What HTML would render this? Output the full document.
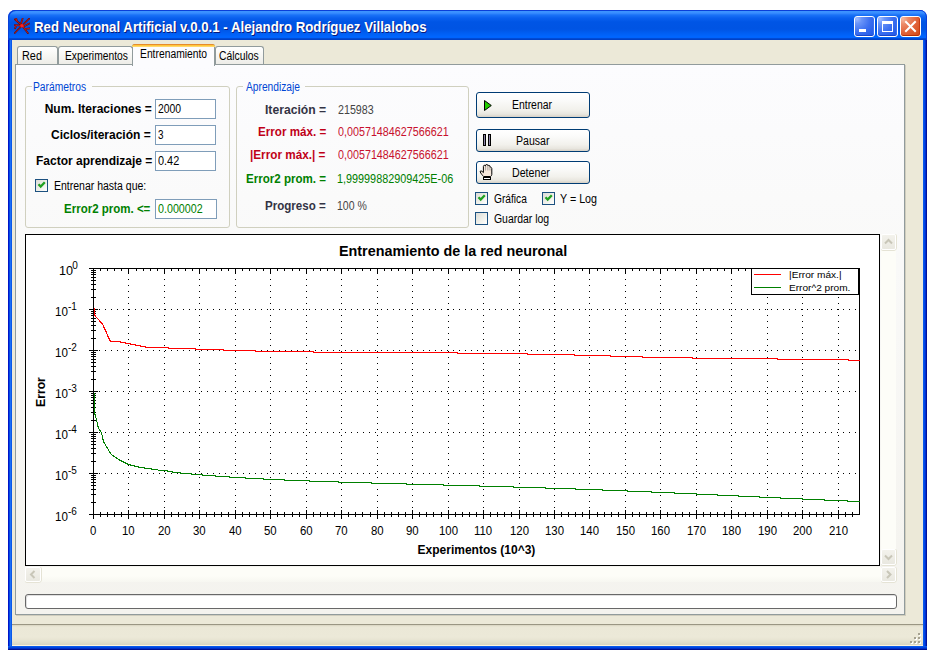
<!DOCTYPE html>
<html><head><meta charset="utf-8"><title>Red Neuronal Artificial</title>
<style>
html,body{margin:0;padding:0;background:#fff;width:938px;height:659px;overflow:hidden;font-family:"Liberation Sans",sans-serif;}
.abs{position:absolute;}
.t{position:absolute;white-space:nowrap;}
/* window frame */
#frame{position:absolute;left:8px;top:10px;width:919px;height:640px;background:#0831d9;border-radius:7px 7px 0 0;overflow:hidden;}
#title{position:absolute;left:0;top:0;width:919px;height:30px;border-radius:7px 7px 0 0;box-shadow:inset 1px 1px 0 #0a3fd8,inset -1px 0 0 #0a3fd8;
 background:linear-gradient(to bottom,#0a3fd8 0px,#0a3fd8 1px,#3d95ff 1px,#3a8eff 3px,#1a72f7 5px,#0a60ee 8px,#0055e5 12px,#0054e3 19px,#005ef2 23px,#0066ff 27px,#0062fb 28px,#0050dc 28px,#003cc0 30px);}
#lb{position:absolute;left:0;top:30px;width:4px;height:610px;background:linear-gradient(to right,#0015c8 0,#0015c8 1px,#0048e6 1px,#0048e6 2px,#1d6ff5 2px,#1d6ff5 3px,#0a58ea 3px);}
#rb{position:absolute;left:915px;top:30px;width:4px;height:610px;background:linear-gradient(to right,#0a58ea 0,#0a58ea 1px,#0048e6 1px,#0048e6 2px,#0030d0 2px,#0030d0 3px,#00139a 3px);}
#bb{position:absolute;left:0;top:636px;width:919px;height:4px;background:linear-gradient(to bottom,#0a58ea 0,#0a58ea 1px,#0046e0 1px,#0046e0 2px,#0030c8 2px,#0030c8 3px,#001090 3px);}
#client{position:absolute;left:12px;top:40px;width:911px;height:606px;background:#ece9d8;}
#status{position:absolute;left:12px;top:624px;width:911px;height:22px;
 background:linear-gradient(to bottom,#9a9683 0,#9a9683 1px,#d6d2bf 1px,#e4e0cd 2px,#ebe8d7 3px,#ece9d8 13px,#e6e2d0 17px,#d9d5c2 21px,#fff4dc 21px,#fff4dc 22px);}
.grip{position:absolute;width:2px;height:2px;background:#a5a18f;box-shadow:1px 1px 0 #fff;}
/* title buttons */
.tbtn{position:absolute;top:16px;width:19px;height:19px;border:1px solid #fff;border-radius:3px;
 background:radial-gradient(circle at 10% 10%,#a0bcff 0,#6a94f8 20%,#3c6ff0 55%,#2a60ea 80%,#2058e4 100%);box-shadow:inset 0 -1px 0 #1a45c8,inset -1px 0 0 #3a70f0;}
.tbtn.close{background:radial-gradient(circle at 10% 10%,#f6b8a0 0,#ec8a68 22%,#e2643c 55%,#d8501f 85%,#cc4012 100%);box-shadow:inset 0 -1px 0 #b83008,inset -1px 0 0 #c83a10;}
/* tabs */
#panel{position:absolute;left:15px;top:64px;width:888px;height:549px;border:1px solid #919b9c;
 background:linear-gradient(to bottom,#fcfcfe 0,#f9f9f8 200px,#f4f3ee 548px);box-shadow:1px 1px 0 #d0cdbd;}
.tab{position:absolute;top:46px;height:17px;border:1px solid #919b9c;border-bottom:none;border-radius:3px 3px 0 0;
 background:linear-gradient(to bottom,#ffffff 0,#f7f7f4 8px,#ecebe6 18px);}
#seltab{position:absolute;left:132px;top:44px;width:81px;height:21px;border:1px solid #919b9c;border-bottom:none;border-radius:3px 3px 0 0;background:#fcfcfe;}
#seltab:before{content:"";position:absolute;left:-1px;top:-1px;right:-1px;height:3px;background:linear-gradient(to bottom,#e68b2c 0,#e68b2c 1px,#ffc73c 1px,#ffc73c 2px,#ffd86b 2px);border-radius:3px 3px 0 0;}
/* group boxes */
.grp{position:absolute;border:1px solid #d0d0bf;border-radius:3px;}
.glbl{position:absolute;height:6px;background:#fbfbfc;}
/* textbox */
.tb{position:absolute;border:1px solid #7f9db9;background:#fff;width:59px;height:18px;}
/* buttons */
.btn{position:absolute;left:476px;width:112px;border:1px solid #003c74;border-radius:3px;
 background:linear-gradient(to bottom,#ffffff 0,#fbfbfa 30%,#f2f1ec 70%,#e8e6df 88%,#d6d0c5 100%);}
/* checkbox */
.cb{position:absolute;width:11px;height:11px;border:1px solid #1c5180;
 background:linear-gradient(135deg,#dcdcd7 0,#f0f0ea 55%,#ffffff 100%);}
.chk{position:absolute;left:2px;top:2px;}
/* chart */
#chartbox{position:absolute;left:25px;top:234px;width:853px;height:330px;border:1px solid #000;background:#fff;}
.sbtn{position:absolute;width:13px;height:14px;border:1px solid #fff;border-radius:2px;background:linear-gradient(to bottom,#f3f2ec,#e9e8e0);box-shadow:0 1px 0 #e5e3d5, 1px 0 0 #e5e3d5;}
#vtrack{position:absolute;left:881px;top:234px;width:15px;height:331px;background:#fdfdf8;}
#htrack{position:absolute;left:25px;top:567px;width:856px;height:15px;background:linear-gradient(to bottom,#fdfdf8,#fdfdf8 60%,#f7f7f1);}
#prog{position:absolute;left:25px;top:594px;width:870px;height:13px;border:1px solid #686868;border-radius:3px;background:#fff;box-shadow:inset 1px 1px 0 #e0e0e0;}
</style></head>
<body>
<div id="frame">
  <div id="title"></div>
  <div id="lb"></div><div id="rb"></div><div id="bb"></div>
</div>
<div id="client"></div>
<div id="status"></div>
<div class="grip" style="left:918px;top:633px"></div>
<div class="grip" style="left:914px;top:637px"></div><div class="grip" style="left:918px;top:637px"></div>
<div class="grip" style="left:910px;top:641px"></div><div class="grip" style="left:914px;top:641px"></div><div class="grip" style="left:918px;top:641px"></div>

<!-- app icon -->
<svg class="abs" style="left:14px;top:18px" width="16" height="16" viewBox="0 0 16 16">
 <g stroke="#5a0a0a" stroke-width="1.7" stroke-linecap="round" fill="none">
  <path d="M8,7.5 L0.8,1.3 M3,3.2 L2.3,0.6 M7,5.5 L8.6,0.6 M8,7.5 L15.2,0.6 M9.5,8.5 L15.3,5.4 M8,7.5 L0.6,7.2 M2.5,7.3 L1,10.3 M8,7.5 L0.8,15 M8,7.5 L14,15.2 M11,11 L15.6,10.4"/>
 </g>
 <g stroke="#e02020" stroke-width="0.7" stroke-linecap="round" fill="none">
  <path d="M8,7.5 L0.8,1.3 M3,3.2 L2.3,0.6 M7,5.5 L8.6,0.6 M8,7.5 L15.2,0.6 M9.5,8.5 L15.3,5.4 M8,7.5 L0.6,7.2 M2.5,7.3 L1,10.3 M8,7.5 L0.8,15 M8,7.5 L14,15.2 M11,11 L15.6,10.4"/>
 </g>
 <circle cx="8" cy="7.8" r="1.7" fill="#ff2020"/>
</svg>
<!-- title buttons -->
<div class="tbtn" style="left:854px"><div class="abs" style="left:4px;top:12px;width:7px;height:3px;background:#fff"></div></div>
<div class="tbtn" style="left:877px"><div class="abs" style="left:4px;top:4px;width:9px;height:7px;border:1px solid #fff;border-top-width:3px;"></div></div>
<div class="tbtn close" style="left:900px">
 <svg class="abs" style="left:0;top:0" width="19" height="19"><path d="M5,5 L14,14 M14,5 L5,14" stroke="#fff" stroke-width="2" stroke-linecap="square"/></svg>
</div>

<!-- tabs -->
<div class="tab" style="left:17px;width:39px"></div>
<div class="tab" style="left:58px;width:73px"></div>
<div class="tab" style="left:215px;width:47px"></div>
<div id="panel"></div>
<div id="seltab"></div>

<!-- group boxes -->
<div class="grp" style="left:25px;top:86px;width:203px;height:140px"></div>
<div class="glbl" style="left:32px;top:83px;width:60px"></div>
<div class="grp" style="left:236px;top:86px;width:231px;height:140px"></div>
<div class="glbl" style="left:243px;top:83px;width:62px"></div>

<!-- text boxes -->
<div class="tb" style="left:155px;top:99px"></div>
<div class="tb" style="left:155px;top:125px"></div>
<div class="tb" style="left:155px;top:151px"></div>
<div class="tb" style="left:155px;top:199px;width:60px"></div>

<!-- checkbox: entrenar hasta -->
<div class="cb" style="left:35px;top:179px"><svg class="chk" width="9" height="9" style="left:1px;top:1px"><path d="M1.5,3.3 L3.7,5.6 L7.8,1.3" stroke="#21a121" stroke-width="2.3" fill="none"/></svg></div>

<!-- buttons -->
<div class="btn" style="top:92px;height:24px"></div>
<div class="btn" style="top:129px;height:21px"></div>
<div class="btn" style="top:161px;height:21px"></div>
<svg class="abs" style="left:483px;top:99px" width="10" height="13"><path d="M1.5,1.5 L1.5,11.5 L8.3,6.5 Z" fill="#22cc00" stroke="#000" stroke-width="1"/></svg>
<svg class="abs" style="left:482px;top:134px" width="10" height="13"><rect x="1.5" y="0.5" width="2" height="11" fill="#8c84a8" stroke="#000" stroke-width="1"/><rect x="6.5" y="0.5" width="2" height="11" fill="#8c84a8" stroke="#000" stroke-width="1"/></svg>
<svg class="abs" style="left:479px;top:164px" width="15" height="17" viewBox="0 0 15 17">
 <path d="M4.6,12.5 C3.5,11.5 2,9.5 1.2,8 Q0.9,6.9 2.1,6.9 Q3,7.1 4.4,8.6 L4.4,2.4 Q4.5,1.3 5.5,1.3 Q6.4,1.3 6.5,2.2 L6.6,1.2 Q6.8,0.4 7.7,0.4 Q8.7,0.5 8.8,1.4 L8.9,1.8 Q9.2,1.2 10,1.3 Q10.9,1.5 10.9,2.5 L11,3.2 Q11.5,2.9 12.1,3.3 Q12.8,3.8 12.8,4.6 L12.8,10.4 Q12.5,12 11.6,12.5 Z" fill="#f6e8dc" stroke="#000" stroke-width="1"/>
 <path d="M6.55,2 L6.55,6.5 M8.85,1.8 L8.85,6.5 M10.95,2.8 L10.95,6.5" stroke="#8a8a8a" stroke-width="0.7"/>
 <rect x="4.5" y="13.5" width="7" height="2" fill="#fff" stroke="#000" stroke-width="1"/>
</svg>

<!-- checkboxes right -->
<div class="cb" style="left:475px;top:192px"><svg class="chk" width="9" height="9" style="left:1px;top:1px"><path d="M1.5,3.3 L3.7,5.6 L7.8,1.3" stroke="#21a121" stroke-width="2.3" fill="none"/></svg></div>
<div class="cb" style="left:542px;top:192px"><svg class="chk" width="9" height="9" style="left:1px;top:1px"><path d="M1.5,3.3 L3.7,5.6 L7.8,1.3" stroke="#21a121" stroke-width="2.3" fill="none"/></svg></div>
<div class="cb" style="left:475px;top:212px"></div>

<!-- chart -->
<div id="chartbox"></div>
<div id="vtrack"></div>
<div id="htrack"></div>
<div class="sbtn" style="left:881px;top:234px"><svg class="abs" style="left:0;top:0" width="13" height="14"><path d="M3,8.5 L6.5,5 L10,8.5" stroke="#c8c6b8" stroke-width="2" fill="none"/></svg></div>
<div class="sbtn" style="left:881px;top:549px"><svg class="abs" style="left:0;top:0" width="13" height="14"><path d="M3,5.5 L6.5,9 L10,5.5" stroke="#c8c6b8" stroke-width="2" fill="none"/></svg></div>
<div class="sbtn" style="left:25px;top:567px;width:14px;height:13px"><svg class="abs" style="left:0;top:0" width="14" height="13"><path d="M8.5,3 L5,6.5 L8.5,10" stroke="#c8c6b8" stroke-width="2" fill="none"/></svg></div>
<div class="sbtn" style="left:881px;top:567px;width:13px;height:13px"><svg class="abs" style="left:0;top:0" width="13" height="13"><path d="M5,3 L8.5,6.5 L5,10" stroke="#c8c6b8" stroke-width="2" fill="none"/></svg></div>
<div id="prog"></div>

<svg class='abs' style='left:0;top:0' width='938' height='659' shape-rendering='crispEdges'><rect x='99' y='309' width='1' height='1' fill='#000'/><rect x='105' y='309' width='1' height='1' fill='#000'/><rect x='111' y='309' width='1' height='1' fill='#000'/><rect x='117' y='309' width='1' height='1' fill='#000'/><rect x='123' y='309' width='1' height='1' fill='#000'/><rect x='129' y='309' width='1' height='1' fill='#000'/><rect x='135' y='309' width='1' height='1' fill='#000'/><rect x='141' y='309' width='1' height='1' fill='#000'/><rect x='147' y='309' width='1' height='1' fill='#000'/><rect x='153' y='309' width='1' height='1' fill='#000'/><rect x='159' y='309' width='1' height='1' fill='#000'/><rect x='165' y='309' width='1' height='1' fill='#000'/><rect x='171' y='309' width='1' height='1' fill='#000'/><rect x='177' y='309' width='1' height='1' fill='#000'/><rect x='183' y='309' width='1' height='1' fill='#000'/><rect x='189' y='309' width='1' height='1' fill='#000'/><rect x='195' y='309' width='1' height='1' fill='#000'/><rect x='201' y='309' width='1' height='1' fill='#000'/><rect x='207' y='309' width='1' height='1' fill='#000'/><rect x='213' y='309' width='1' height='1' fill='#000'/><rect x='219' y='309' width='1' height='1' fill='#000'/><rect x='225' y='309' width='1' height='1' fill='#000'/><rect x='231' y='309' width='1' height='1' fill='#000'/><rect x='237' y='309' width='1' height='1' fill='#000'/><rect x='243' y='309' width='1' height='1' fill='#000'/><rect x='249' y='309' width='1' height='1' fill='#000'/><rect x='255' y='309' width='1' height='1' fill='#000'/><rect x='261' y='309' width='1' height='1' fill='#000'/><rect x='267' y='309' width='1' height='1' fill='#000'/><rect x='273' y='309' width='1' height='1' fill='#000'/><rect x='279' y='309' width='1' height='1' fill='#000'/><rect x='285' y='309' width='1' height='1' fill='#000'/><rect x='291' y='309' width='1' height='1' fill='#000'/><rect x='297' y='309' width='1' height='1' fill='#000'/><rect x='303' y='309' width='1' height='1' fill='#000'/><rect x='309' y='309' width='1' height='1' fill='#000'/><rect x='315' y='309' width='1' height='1' fill='#000'/><rect x='321' y='309' width='1' height='1' fill='#000'/><rect x='327' y='309' width='1' height='1' fill='#000'/><rect x='333' y='309' width='1' height='1' fill='#000'/><rect x='339' y='309' width='1' height='1' fill='#000'/><rect x='345' y='309' width='1' height='1' fill='#000'/><rect x='351' y='309' width='1' height='1' fill='#000'/><rect x='357' y='309' width='1' height='1' fill='#000'/><rect x='363' y='309' width='1' height='1' fill='#000'/><rect x='369' y='309' width='1' height='1' fill='#000'/><rect x='375' y='309' width='1' height='1' fill='#000'/><rect x='381' y='309' width='1' height='1' fill='#000'/><rect x='387' y='309' width='1' height='1' fill='#000'/><rect x='393' y='309' width='1' height='1' fill='#000'/><rect x='399' y='309' width='1' height='1' fill='#000'/><rect x='405' y='309' width='1' height='1' fill='#000'/><rect x='411' y='309' width='1' height='1' fill='#000'/><rect x='417' y='309' width='1' height='1' fill='#000'/><rect x='423' y='309' width='1' height='1' fill='#000'/><rect x='429' y='309' width='1' height='1' fill='#000'/><rect x='435' y='309' width='1' height='1' fill='#000'/><rect x='441' y='309' width='1' height='1' fill='#000'/><rect x='447' y='309' width='1' height='1' fill='#000'/><rect x='453' y='309' width='1' height='1' fill='#000'/><rect x='459' y='309' width='1' height='1' fill='#000'/><rect x='465' y='309' width='1' height='1' fill='#000'/><rect x='471' y='309' width='1' height='1' fill='#000'/><rect x='477' y='309' width='1' height='1' fill='#000'/><rect x='483' y='309' width='1' height='1' fill='#000'/><rect x='489' y='309' width='1' height='1' fill='#000'/><rect x='495' y='309' width='1' height='1' fill='#000'/><rect x='501' y='309' width='1' height='1' fill='#000'/><rect x='507' y='309' width='1' height='1' fill='#000'/><rect x='513' y='309' width='1' height='1' fill='#000'/><rect x='519' y='309' width='1' height='1' fill='#000'/><rect x='525' y='309' width='1' height='1' fill='#000'/><rect x='531' y='309' width='1' height='1' fill='#000'/><rect x='537' y='309' width='1' height='1' fill='#000'/><rect x='543' y='309' width='1' height='1' fill='#000'/><rect x='549' y='309' width='1' height='1' fill='#000'/><rect x='555' y='309' width='1' height='1' fill='#000'/><rect x='561' y='309' width='1' height='1' fill='#000'/><rect x='567' y='309' width='1' height='1' fill='#000'/><rect x='573' y='309' width='1' height='1' fill='#000'/><rect x='579' y='309' width='1' height='1' fill='#000'/><rect x='585' y='309' width='1' height='1' fill='#000'/><rect x='591' y='309' width='1' height='1' fill='#000'/><rect x='597' y='309' width='1' height='1' fill='#000'/><rect x='603' y='309' width='1' height='1' fill='#000'/><rect x='609' y='309' width='1' height='1' fill='#000'/><rect x='615' y='309' width='1' height='1' fill='#000'/><rect x='621' y='309' width='1' height='1' fill='#000'/><rect x='627' y='309' width='1' height='1' fill='#000'/><rect x='633' y='309' width='1' height='1' fill='#000'/><rect x='639' y='309' width='1' height='1' fill='#000'/><rect x='645' y='309' width='1' height='1' fill='#000'/><rect x='651' y='309' width='1' height='1' fill='#000'/><rect x='657' y='309' width='1' height='1' fill='#000'/><rect x='663' y='309' width='1' height='1' fill='#000'/><rect x='669' y='309' width='1' height='1' fill='#000'/><rect x='675' y='309' width='1' height='1' fill='#000'/><rect x='681' y='309' width='1' height='1' fill='#000'/><rect x='687' y='309' width='1' height='1' fill='#000'/><rect x='693' y='309' width='1' height='1' fill='#000'/><rect x='699' y='309' width='1' height='1' fill='#000'/><rect x='705' y='309' width='1' height='1' fill='#000'/><rect x='711' y='309' width='1' height='1' fill='#000'/><rect x='717' y='309' width='1' height='1' fill='#000'/><rect x='723' y='309' width='1' height='1' fill='#000'/><rect x='729' y='309' width='1' height='1' fill='#000'/><rect x='735' y='309' width='1' height='1' fill='#000'/><rect x='741' y='309' width='1' height='1' fill='#000'/><rect x='747' y='309' width='1' height='1' fill='#000'/><rect x='753' y='309' width='1' height='1' fill='#000'/><rect x='759' y='309' width='1' height='1' fill='#000'/><rect x='765' y='309' width='1' height='1' fill='#000'/><rect x='771' y='309' width='1' height='1' fill='#000'/><rect x='777' y='309' width='1' height='1' fill='#000'/><rect x='783' y='309' width='1' height='1' fill='#000'/><rect x='789' y='309' width='1' height='1' fill='#000'/><rect x='795' y='309' width='1' height='1' fill='#000'/><rect x='801' y='309' width='1' height='1' fill='#000'/><rect x='807' y='309' width='1' height='1' fill='#000'/><rect x='813' y='309' width='1' height='1' fill='#000'/><rect x='819' y='309' width='1' height='1' fill='#000'/><rect x='825' y='309' width='1' height='1' fill='#000'/><rect x='831' y='309' width='1' height='1' fill='#000'/><rect x='837' y='309' width='1' height='1' fill='#000'/><rect x='843' y='309' width='1' height='1' fill='#000'/><rect x='849' y='309' width='1' height='1' fill='#000'/><rect x='855' y='309' width='1' height='1' fill='#000'/><rect x='99' y='350' width='1' height='1' fill='#000'/><rect x='105' y='350' width='1' height='1' fill='#000'/><rect x='111' y='350' width='1' height='1' fill='#000'/><rect x='117' y='350' width='1' height='1' fill='#000'/><rect x='123' y='350' width='1' height='1' fill='#000'/><rect x='129' y='350' width='1' height='1' fill='#000'/><rect x='135' y='350' width='1' height='1' fill='#000'/><rect x='141' y='350' width='1' height='1' fill='#000'/><rect x='147' y='350' width='1' height='1' fill='#000'/><rect x='153' y='350' width='1' height='1' fill='#000'/><rect x='159' y='350' width='1' height='1' fill='#000'/><rect x='165' y='350' width='1' height='1' fill='#000'/><rect x='171' y='350' width='1' height='1' fill='#000'/><rect x='177' y='350' width='1' height='1' fill='#000'/><rect x='183' y='350' width='1' height='1' fill='#000'/><rect x='189' y='350' width='1' height='1' fill='#000'/><rect x='195' y='350' width='1' height='1' fill='#000'/><rect x='201' y='350' width='1' height='1' fill='#000'/><rect x='207' y='350' width='1' height='1' fill='#000'/><rect x='213' y='350' width='1' height='1' fill='#000'/><rect x='219' y='350' width='1' height='1' fill='#000'/><rect x='225' y='350' width='1' height='1' fill='#000'/><rect x='231' y='350' width='1' height='1' fill='#000'/><rect x='237' y='350' width='1' height='1' fill='#000'/><rect x='243' y='350' width='1' height='1' fill='#000'/><rect x='249' y='350' width='1' height='1' fill='#000'/><rect x='255' y='350' width='1' height='1' fill='#000'/><rect x='261' y='350' width='1' height='1' fill='#000'/><rect x='267' y='350' width='1' height='1' fill='#000'/><rect x='273' y='350' width='1' height='1' fill='#000'/><rect x='279' y='350' width='1' height='1' fill='#000'/><rect x='285' y='350' width='1' height='1' fill='#000'/><rect x='291' y='350' width='1' height='1' fill='#000'/><rect x='297' y='350' width='1' height='1' fill='#000'/><rect x='303' y='350' width='1' height='1' fill='#000'/><rect x='309' y='350' width='1' height='1' fill='#000'/><rect x='315' y='350' width='1' height='1' fill='#000'/><rect x='321' y='350' width='1' height='1' fill='#000'/><rect x='327' y='350' width='1' height='1' fill='#000'/><rect x='333' y='350' width='1' height='1' fill='#000'/><rect x='339' y='350' width='1' height='1' fill='#000'/><rect x='345' y='350' width='1' height='1' fill='#000'/><rect x='351' y='350' width='1' height='1' fill='#000'/><rect x='357' y='350' width='1' height='1' fill='#000'/><rect x='363' y='350' width='1' height='1' fill='#000'/><rect x='369' y='350' width='1' height='1' fill='#000'/><rect x='375' y='350' width='1' height='1' fill='#000'/><rect x='381' y='350' width='1' height='1' fill='#000'/><rect x='387' y='350' width='1' height='1' fill='#000'/><rect x='393' y='350' width='1' height='1' fill='#000'/><rect x='399' y='350' width='1' height='1' fill='#000'/><rect x='405' y='350' width='1' height='1' fill='#000'/><rect x='411' y='350' width='1' height='1' fill='#000'/><rect x='417' y='350' width='1' height='1' fill='#000'/><rect x='423' y='350' width='1' height='1' fill='#000'/><rect x='429' y='350' width='1' height='1' fill='#000'/><rect x='435' y='350' width='1' height='1' fill='#000'/><rect x='441' y='350' width='1' height='1' fill='#000'/><rect x='447' y='350' width='1' height='1' fill='#000'/><rect x='453' y='350' width='1' height='1' fill='#000'/><rect x='459' y='350' width='1' height='1' fill='#000'/><rect x='465' y='350' width='1' height='1' fill='#000'/><rect x='471' y='350' width='1' height='1' fill='#000'/><rect x='477' y='350' width='1' height='1' fill='#000'/><rect x='483' y='350' width='1' height='1' fill='#000'/><rect x='489' y='350' width='1' height='1' fill='#000'/><rect x='495' y='350' width='1' height='1' fill='#000'/><rect x='501' y='350' width='1' height='1' fill='#000'/><rect x='507' y='350' width='1' height='1' fill='#000'/><rect x='513' y='350' width='1' height='1' fill='#000'/><rect x='519' y='350' width='1' height='1' fill='#000'/><rect x='525' y='350' width='1' height='1' fill='#000'/><rect x='531' y='350' width='1' height='1' fill='#000'/><rect x='537' y='350' width='1' height='1' fill='#000'/><rect x='543' y='350' width='1' height='1' fill='#000'/><rect x='549' y='350' width='1' height='1' fill='#000'/><rect x='555' y='350' width='1' height='1' fill='#000'/><rect x='561' y='350' width='1' height='1' fill='#000'/><rect x='567' y='350' width='1' height='1' fill='#000'/><rect x='573' y='350' width='1' height='1' fill='#000'/><rect x='579' y='350' width='1' height='1' fill='#000'/><rect x='585' y='350' width='1' height='1' fill='#000'/><rect x='591' y='350' width='1' height='1' fill='#000'/><rect x='597' y='350' width='1' height='1' fill='#000'/><rect x='603' y='350' width='1' height='1' fill='#000'/><rect x='609' y='350' width='1' height='1' fill='#000'/><rect x='615' y='350' width='1' height='1' fill='#000'/><rect x='621' y='350' width='1' height='1' fill='#000'/><rect x='627' y='350' width='1' height='1' fill='#000'/><rect x='633' y='350' width='1' height='1' fill='#000'/><rect x='639' y='350' width='1' height='1' fill='#000'/><rect x='645' y='350' width='1' height='1' fill='#000'/><rect x='651' y='350' width='1' height='1' fill='#000'/><rect x='657' y='350' width='1' height='1' fill='#000'/><rect x='663' y='350' width='1' height='1' fill='#000'/><rect x='669' y='350' width='1' height='1' fill='#000'/><rect x='675' y='350' width='1' height='1' fill='#000'/><rect x='681' y='350' width='1' height='1' fill='#000'/><rect x='687' y='350' width='1' height='1' fill='#000'/><rect x='693' y='350' width='1' height='1' fill='#000'/><rect x='699' y='350' width='1' height='1' fill='#000'/><rect x='705' y='350' width='1' height='1' fill='#000'/><rect x='711' y='350' width='1' height='1' fill='#000'/><rect x='717' y='350' width='1' height='1' fill='#000'/><rect x='723' y='350' width='1' height='1' fill='#000'/><rect x='729' y='350' width='1' height='1' fill='#000'/><rect x='735' y='350' width='1' height='1' fill='#000'/><rect x='741' y='350' width='1' height='1' fill='#000'/><rect x='747' y='350' width='1' height='1' fill='#000'/><rect x='753' y='350' width='1' height='1' fill='#000'/><rect x='759' y='350' width='1' height='1' fill='#000'/><rect x='765' y='350' width='1' height='1' fill='#000'/><rect x='771' y='350' width='1' height='1' fill='#000'/><rect x='777' y='350' width='1' height='1' fill='#000'/><rect x='783' y='350' width='1' height='1' fill='#000'/><rect x='789' y='350' width='1' height='1' fill='#000'/><rect x='795' y='350' width='1' height='1' fill='#000'/><rect x='801' y='350' width='1' height='1' fill='#000'/><rect x='807' y='350' width='1' height='1' fill='#000'/><rect x='813' y='350' width='1' height='1' fill='#000'/><rect x='819' y='350' width='1' height='1' fill='#000'/><rect x='825' y='350' width='1' height='1' fill='#000'/><rect x='831' y='350' width='1' height='1' fill='#000'/><rect x='837' y='350' width='1' height='1' fill='#000'/><rect x='843' y='350' width='1' height='1' fill='#000'/><rect x='849' y='350' width='1' height='1' fill='#000'/><rect x='855' y='350' width='1' height='1' fill='#000'/><rect x='99' y='391' width='1' height='1' fill='#000'/><rect x='105' y='391' width='1' height='1' fill='#000'/><rect x='111' y='391' width='1' height='1' fill='#000'/><rect x='117' y='391' width='1' height='1' fill='#000'/><rect x='123' y='391' width='1' height='1' fill='#000'/><rect x='129' y='391' width='1' height='1' fill='#000'/><rect x='135' y='391' width='1' height='1' fill='#000'/><rect x='141' y='391' width='1' height='1' fill='#000'/><rect x='147' y='391' width='1' height='1' fill='#000'/><rect x='153' y='391' width='1' height='1' fill='#000'/><rect x='159' y='391' width='1' height='1' fill='#000'/><rect x='165' y='391' width='1' height='1' fill='#000'/><rect x='171' y='391' width='1' height='1' fill='#000'/><rect x='177' y='391' width='1' height='1' fill='#000'/><rect x='183' y='391' width='1' height='1' fill='#000'/><rect x='189' y='391' width='1' height='1' fill='#000'/><rect x='195' y='391' width='1' height='1' fill='#000'/><rect x='201' y='391' width='1' height='1' fill='#000'/><rect x='207' y='391' width='1' height='1' fill='#000'/><rect x='213' y='391' width='1' height='1' fill='#000'/><rect x='219' y='391' width='1' height='1' fill='#000'/><rect x='225' y='391' width='1' height='1' fill='#000'/><rect x='231' y='391' width='1' height='1' fill='#000'/><rect x='237' y='391' width='1' height='1' fill='#000'/><rect x='243' y='391' width='1' height='1' fill='#000'/><rect x='249' y='391' width='1' height='1' fill='#000'/><rect x='255' y='391' width='1' height='1' fill='#000'/><rect x='261' y='391' width='1' height='1' fill='#000'/><rect x='267' y='391' width='1' height='1' fill='#000'/><rect x='273' y='391' width='1' height='1' fill='#000'/><rect x='279' y='391' width='1' height='1' fill='#000'/><rect x='285' y='391' width='1' height='1' fill='#000'/><rect x='291' y='391' width='1' height='1' fill='#000'/><rect x='297' y='391' width='1' height='1' fill='#000'/><rect x='303' y='391' width='1' height='1' fill='#000'/><rect x='309' y='391' width='1' height='1' fill='#000'/><rect x='315' y='391' width='1' height='1' fill='#000'/><rect x='321' y='391' width='1' height='1' fill='#000'/><rect x='327' y='391' width='1' height='1' fill='#000'/><rect x='333' y='391' width='1' height='1' fill='#000'/><rect x='339' y='391' width='1' height='1' fill='#000'/><rect x='345' y='391' width='1' height='1' fill='#000'/><rect x='351' y='391' width='1' height='1' fill='#000'/><rect x='357' y='391' width='1' height='1' fill='#000'/><rect x='363' y='391' width='1' height='1' fill='#000'/><rect x='369' y='391' width='1' height='1' fill='#000'/><rect x='375' y='391' width='1' height='1' fill='#000'/><rect x='381' y='391' width='1' height='1' fill='#000'/><rect x='387' y='391' width='1' height='1' fill='#000'/><rect x='393' y='391' width='1' height='1' fill='#000'/><rect x='399' y='391' width='1' height='1' fill='#000'/><rect x='405' y='391' width='1' height='1' fill='#000'/><rect x='411' y='391' width='1' height='1' fill='#000'/><rect x='417' y='391' width='1' height='1' fill='#000'/><rect x='423' y='391' width='1' height='1' fill='#000'/><rect x='429' y='391' width='1' height='1' fill='#000'/><rect x='435' y='391' width='1' height='1' fill='#000'/><rect x='441' y='391' width='1' height='1' fill='#000'/><rect x='447' y='391' width='1' height='1' fill='#000'/><rect x='453' y='391' width='1' height='1' fill='#000'/><rect x='459' y='391' width='1' height='1' fill='#000'/><rect x='465' y='391' width='1' height='1' fill='#000'/><rect x='471' y='391' width='1' height='1' fill='#000'/><rect x='477' y='391' width='1' height='1' fill='#000'/><rect x='483' y='391' width='1' height='1' fill='#000'/><rect x='489' y='391' width='1' height='1' fill='#000'/><rect x='495' y='391' width='1' height='1' fill='#000'/><rect x='501' y='391' width='1' height='1' fill='#000'/><rect x='507' y='391' width='1' height='1' fill='#000'/><rect x='513' y='391' width='1' height='1' fill='#000'/><rect x='519' y='391' width='1' height='1' fill='#000'/><rect x='525' y='391' width='1' height='1' fill='#000'/><rect x='531' y='391' width='1' height='1' fill='#000'/><rect x='537' y='391' width='1' height='1' fill='#000'/><rect x='543' y='391' width='1' height='1' fill='#000'/><rect x='549' y='391' width='1' height='1' fill='#000'/><rect x='555' y='391' width='1' height='1' fill='#000'/><rect x='561' y='391' width='1' height='1' fill='#000'/><rect x='567' y='391' width='1' height='1' fill='#000'/><rect x='573' y='391' width='1' height='1' fill='#000'/><rect x='579' y='391' width='1' height='1' fill='#000'/><rect x='585' y='391' width='1' height='1' fill='#000'/><rect x='591' y='391' width='1' height='1' fill='#000'/><rect x='597' y='391' width='1' height='1' fill='#000'/><rect x='603' y='391' width='1' height='1' fill='#000'/><rect x='609' y='391' width='1' height='1' fill='#000'/><rect x='615' y='391' width='1' height='1' fill='#000'/><rect x='621' y='391' width='1' height='1' fill='#000'/><rect x='627' y='391' width='1' height='1' fill='#000'/><rect x='633' y='391' width='1' height='1' fill='#000'/><rect x='639' y='391' width='1' height='1' fill='#000'/><rect x='645' y='391' width='1' height='1' fill='#000'/><rect x='651' y='391' width='1' height='1' fill='#000'/><rect x='657' y='391' width='1' height='1' fill='#000'/><rect x='663' y='391' width='1' height='1' fill='#000'/><rect x='669' y='391' width='1' height='1' fill='#000'/><rect x='675' y='391' width='1' height='1' fill='#000'/><rect x='681' y='391' width='1' height='1' fill='#000'/><rect x='687' y='391' width='1' height='1' fill='#000'/><rect x='693' y='391' width='1' height='1' fill='#000'/><rect x='699' y='391' width='1' height='1' fill='#000'/><rect x='705' y='391' width='1' height='1' fill='#000'/><rect x='711' y='391' width='1' height='1' fill='#000'/><rect x='717' y='391' width='1' height='1' fill='#000'/><rect x='723' y='391' width='1' height='1' fill='#000'/><rect x='729' y='391' width='1' height='1' fill='#000'/><rect x='735' y='391' width='1' height='1' fill='#000'/><rect x='741' y='391' width='1' height='1' fill='#000'/><rect x='747' y='391' width='1' height='1' fill='#000'/><rect x='753' y='391' width='1' height='1' fill='#000'/><rect x='759' y='391' width='1' height='1' fill='#000'/><rect x='765' y='391' width='1' height='1' fill='#000'/><rect x='771' y='391' width='1' height='1' fill='#000'/><rect x='777' y='391' width='1' height='1' fill='#000'/><rect x='783' y='391' width='1' height='1' fill='#000'/><rect x='789' y='391' width='1' height='1' fill='#000'/><rect x='795' y='391' width='1' height='1' fill='#000'/><rect x='801' y='391' width='1' height='1' fill='#000'/><rect x='807' y='391' width='1' height='1' fill='#000'/><rect x='813' y='391' width='1' height='1' fill='#000'/><rect x='819' y='391' width='1' height='1' fill='#000'/><rect x='825' y='391' width='1' height='1' fill='#000'/><rect x='831' y='391' width='1' height='1' fill='#000'/><rect x='837' y='391' width='1' height='1' fill='#000'/><rect x='843' y='391' width='1' height='1' fill='#000'/><rect x='849' y='391' width='1' height='1' fill='#000'/><rect x='855' y='391' width='1' height='1' fill='#000'/><rect x='99' y='432' width='1' height='1' fill='#000'/><rect x='105' y='432' width='1' height='1' fill='#000'/><rect x='111' y='432' width='1' height='1' fill='#000'/><rect x='117' y='432' width='1' height='1' fill='#000'/><rect x='123' y='432' width='1' height='1' fill='#000'/><rect x='129' y='432' width='1' height='1' fill='#000'/><rect x='135' y='432' width='1' height='1' fill='#000'/><rect x='141' y='432' width='1' height='1' fill='#000'/><rect x='147' y='432' width='1' height='1' fill='#000'/><rect x='153' y='432' width='1' height='1' fill='#000'/><rect x='159' y='432' width='1' height='1' fill='#000'/><rect x='165' y='432' width='1' height='1' fill='#000'/><rect x='171' y='432' width='1' height='1' fill='#000'/><rect x='177' y='432' width='1' height='1' fill='#000'/><rect x='183' y='432' width='1' height='1' fill='#000'/><rect x='189' y='432' width='1' height='1' fill='#000'/><rect x='195' y='432' width='1' height='1' fill='#000'/><rect x='201' y='432' width='1' height='1' fill='#000'/><rect x='207' y='432' width='1' height='1' fill='#000'/><rect x='213' y='432' width='1' height='1' fill='#000'/><rect x='219' y='432' width='1' height='1' fill='#000'/><rect x='225' y='432' width='1' height='1' fill='#000'/><rect x='231' y='432' width='1' height='1' fill='#000'/><rect x='237' y='432' width='1' height='1' fill='#000'/><rect x='243' y='432' width='1' height='1' fill='#000'/><rect x='249' y='432' width='1' height='1' fill='#000'/><rect x='255' y='432' width='1' height='1' fill='#000'/><rect x='261' y='432' width='1' height='1' fill='#000'/><rect x='267' y='432' width='1' height='1' fill='#000'/><rect x='273' y='432' width='1' height='1' fill='#000'/><rect x='279' y='432' width='1' height='1' fill='#000'/><rect x='285' y='432' width='1' height='1' fill='#000'/><rect x='291' y='432' width='1' height='1' fill='#000'/><rect x='297' y='432' width='1' height='1' fill='#000'/><rect x='303' y='432' width='1' height='1' fill='#000'/><rect x='309' y='432' width='1' height='1' fill='#000'/><rect x='315' y='432' width='1' height='1' fill='#000'/><rect x='321' y='432' width='1' height='1' fill='#000'/><rect x='327' y='432' width='1' height='1' fill='#000'/><rect x='333' y='432' width='1' height='1' fill='#000'/><rect x='339' y='432' width='1' height='1' fill='#000'/><rect x='345' y='432' width='1' height='1' fill='#000'/><rect x='351' y='432' width='1' height='1' fill='#000'/><rect x='357' y='432' width='1' height='1' fill='#000'/><rect x='363' y='432' width='1' height='1' fill='#000'/><rect x='369' y='432' width='1' height='1' fill='#000'/><rect x='375' y='432' width='1' height='1' fill='#000'/><rect x='381' y='432' width='1' height='1' fill='#000'/><rect x='387' y='432' width='1' height='1' fill='#000'/><rect x='393' y='432' width='1' height='1' fill='#000'/><rect x='399' y='432' width='1' height='1' fill='#000'/><rect x='405' y='432' width='1' height='1' fill='#000'/><rect x='411' y='432' width='1' height='1' fill='#000'/><rect x='417' y='432' width='1' height='1' fill='#000'/><rect x='423' y='432' width='1' height='1' fill='#000'/><rect x='429' y='432' width='1' height='1' fill='#000'/><rect x='435' y='432' width='1' height='1' fill='#000'/><rect x='441' y='432' width='1' height='1' fill='#000'/><rect x='447' y='432' width='1' height='1' fill='#000'/><rect x='453' y='432' width='1' height='1' fill='#000'/><rect x='459' y='432' width='1' height='1' fill='#000'/><rect x='465' y='432' width='1' height='1' fill='#000'/><rect x='471' y='432' width='1' height='1' fill='#000'/><rect x='477' y='432' width='1' height='1' fill='#000'/><rect x='483' y='432' width='1' height='1' fill='#000'/><rect x='489' y='432' width='1' height='1' fill='#000'/><rect x='495' y='432' width='1' height='1' fill='#000'/><rect x='501' y='432' width='1' height='1' fill='#000'/><rect x='507' y='432' width='1' height='1' fill='#000'/><rect x='513' y='432' width='1' height='1' fill='#000'/><rect x='519' y='432' width='1' height='1' fill='#000'/><rect x='525' y='432' width='1' height='1' fill='#000'/><rect x='531' y='432' width='1' height='1' fill='#000'/><rect x='537' y='432' width='1' height='1' fill='#000'/><rect x='543' y='432' width='1' height='1' fill='#000'/><rect x='549' y='432' width='1' height='1' fill='#000'/><rect x='555' y='432' width='1' height='1' fill='#000'/><rect x='561' y='432' width='1' height='1' fill='#000'/><rect x='567' y='432' width='1' height='1' fill='#000'/><rect x='573' y='432' width='1' height='1' fill='#000'/><rect x='579' y='432' width='1' height='1' fill='#000'/><rect x='585' y='432' width='1' height='1' fill='#000'/><rect x='591' y='432' width='1' height='1' fill='#000'/><rect x='597' y='432' width='1' height='1' fill='#000'/><rect x='603' y='432' width='1' height='1' fill='#000'/><rect x='609' y='432' width='1' height='1' fill='#000'/><rect x='615' y='432' width='1' height='1' fill='#000'/><rect x='621' y='432' width='1' height='1' fill='#000'/><rect x='627' y='432' width='1' height='1' fill='#000'/><rect x='633' y='432' width='1' height='1' fill='#000'/><rect x='639' y='432' width='1' height='1' fill='#000'/><rect x='645' y='432' width='1' height='1' fill='#000'/><rect x='651' y='432' width='1' height='1' fill='#000'/><rect x='657' y='432' width='1' height='1' fill='#000'/><rect x='663' y='432' width='1' height='1' fill='#000'/><rect x='669' y='432' width='1' height='1' fill='#000'/><rect x='675' y='432' width='1' height='1' fill='#000'/><rect x='681' y='432' width='1' height='1' fill='#000'/><rect x='687' y='432' width='1' height='1' fill='#000'/><rect x='693' y='432' width='1' height='1' fill='#000'/><rect x='699' y='432' width='1' height='1' fill='#000'/><rect x='705' y='432' width='1' height='1' fill='#000'/><rect x='711' y='432' width='1' height='1' fill='#000'/><rect x='717' y='432' width='1' height='1' fill='#000'/><rect x='723' y='432' width='1' height='1' fill='#000'/><rect x='729' y='432' width='1' height='1' fill='#000'/><rect x='735' y='432' width='1' height='1' fill='#000'/><rect x='741' y='432' width='1' height='1' fill='#000'/><rect x='747' y='432' width='1' height='1' fill='#000'/><rect x='753' y='432' width='1' height='1' fill='#000'/><rect x='759' y='432' width='1' height='1' fill='#000'/><rect x='765' y='432' width='1' height='1' fill='#000'/><rect x='771' y='432' width='1' height='1' fill='#000'/><rect x='777' y='432' width='1' height='1' fill='#000'/><rect x='783' y='432' width='1' height='1' fill='#000'/><rect x='789' y='432' width='1' height='1' fill='#000'/><rect x='795' y='432' width='1' height='1' fill='#000'/><rect x='801' y='432' width='1' height='1' fill='#000'/><rect x='807' y='432' width='1' height='1' fill='#000'/><rect x='813' y='432' width='1' height='1' fill='#000'/><rect x='819' y='432' width='1' height='1' fill='#000'/><rect x='825' y='432' width='1' height='1' fill='#000'/><rect x='831' y='432' width='1' height='1' fill='#000'/><rect x='837' y='432' width='1' height='1' fill='#000'/><rect x='843' y='432' width='1' height='1' fill='#000'/><rect x='849' y='432' width='1' height='1' fill='#000'/><rect x='855' y='432' width='1' height='1' fill='#000'/><rect x='99' y='473' width='1' height='1' fill='#000'/><rect x='105' y='473' width='1' height='1' fill='#000'/><rect x='111' y='473' width='1' height='1' fill='#000'/><rect x='117' y='473' width='1' height='1' fill='#000'/><rect x='123' y='473' width='1' height='1' fill='#000'/><rect x='129' y='473' width='1' height='1' fill='#000'/><rect x='135' y='473' width='1' height='1' fill='#000'/><rect x='141' y='473' width='1' height='1' fill='#000'/><rect x='147' y='473' width='1' height='1' fill='#000'/><rect x='153' y='473' width='1' height='1' fill='#000'/><rect x='159' y='473' width='1' height='1' fill='#000'/><rect x='165' y='473' width='1' height='1' fill='#000'/><rect x='171' y='473' width='1' height='1' fill='#000'/><rect x='177' y='473' width='1' height='1' fill='#000'/><rect x='183' y='473' width='1' height='1' fill='#000'/><rect x='189' y='473' width='1' height='1' fill='#000'/><rect x='195' y='473' width='1' height='1' fill='#000'/><rect x='201' y='473' width='1' height='1' fill='#000'/><rect x='207' y='473' width='1' height='1' fill='#000'/><rect x='213' y='473' width='1' height='1' fill='#000'/><rect x='219' y='473' width='1' height='1' fill='#000'/><rect x='225' y='473' width='1' height='1' fill='#000'/><rect x='231' y='473' width='1' height='1' fill='#000'/><rect x='237' y='473' width='1' height='1' fill='#000'/><rect x='243' y='473' width='1' height='1' fill='#000'/><rect x='249' y='473' width='1' height='1' fill='#000'/><rect x='255' y='473' width='1' height='1' fill='#000'/><rect x='261' y='473' width='1' height='1' fill='#000'/><rect x='267' y='473' width='1' height='1' fill='#000'/><rect x='273' y='473' width='1' height='1' fill='#000'/><rect x='279' y='473' width='1' height='1' fill='#000'/><rect x='285' y='473' width='1' height='1' fill='#000'/><rect x='291' y='473' width='1' height='1' fill='#000'/><rect x='297' y='473' width='1' height='1' fill='#000'/><rect x='303' y='473' width='1' height='1' fill='#000'/><rect x='309' y='473' width='1' height='1' fill='#000'/><rect x='315' y='473' width='1' height='1' fill='#000'/><rect x='321' y='473' width='1' height='1' fill='#000'/><rect x='327' y='473' width='1' height='1' fill='#000'/><rect x='333' y='473' width='1' height='1' fill='#000'/><rect x='339' y='473' width='1' height='1' fill='#000'/><rect x='345' y='473' width='1' height='1' fill='#000'/><rect x='351' y='473' width='1' height='1' fill='#000'/><rect x='357' y='473' width='1' height='1' fill='#000'/><rect x='363' y='473' width='1' height='1' fill='#000'/><rect x='369' y='473' width='1' height='1' fill='#000'/><rect x='375' y='473' width='1' height='1' fill='#000'/><rect x='381' y='473' width='1' height='1' fill='#000'/><rect x='387' y='473' width='1' height='1' fill='#000'/><rect x='393' y='473' width='1' height='1' fill='#000'/><rect x='399' y='473' width='1' height='1' fill='#000'/><rect x='405' y='473' width='1' height='1' fill='#000'/><rect x='411' y='473' width='1' height='1' fill='#000'/><rect x='417' y='473' width='1' height='1' fill='#000'/><rect x='423' y='473' width='1' height='1' fill='#000'/><rect x='429' y='473' width='1' height='1' fill='#000'/><rect x='435' y='473' width='1' height='1' fill='#000'/><rect x='441' y='473' width='1' height='1' fill='#000'/><rect x='447' y='473' width='1' height='1' fill='#000'/><rect x='453' y='473' width='1' height='1' fill='#000'/><rect x='459' y='473' width='1' height='1' fill='#000'/><rect x='465' y='473' width='1' height='1' fill='#000'/><rect x='471' y='473' width='1' height='1' fill='#000'/><rect x='477' y='473' width='1' height='1' fill='#000'/><rect x='483' y='473' width='1' height='1' fill='#000'/><rect x='489' y='473' width='1' height='1' fill='#000'/><rect x='495' y='473' width='1' height='1' fill='#000'/><rect x='501' y='473' width='1' height='1' fill='#000'/><rect x='507' y='473' width='1' height='1' fill='#000'/><rect x='513' y='473' width='1' height='1' fill='#000'/><rect x='519' y='473' width='1' height='1' fill='#000'/><rect x='525' y='473' width='1' height='1' fill='#000'/><rect x='531' y='473' width='1' height='1' fill='#000'/><rect x='537' y='473' width='1' height='1' fill='#000'/><rect x='543' y='473' width='1' height='1' fill='#000'/><rect x='549' y='473' width='1' height='1' fill='#000'/><rect x='555' y='473' width='1' height='1' fill='#000'/><rect x='561' y='473' width='1' height='1' fill='#000'/><rect x='567' y='473' width='1' height='1' fill='#000'/><rect x='573' y='473' width='1' height='1' fill='#000'/><rect x='579' y='473' width='1' height='1' fill='#000'/><rect x='585' y='473' width='1' height='1' fill='#000'/><rect x='591' y='473' width='1' height='1' fill='#000'/><rect x='597' y='473' width='1' height='1' fill='#000'/><rect x='603' y='473' width='1' height='1' fill='#000'/><rect x='609' y='473' width='1' height='1' fill='#000'/><rect x='615' y='473' width='1' height='1' fill='#000'/><rect x='621' y='473' width='1' height='1' fill='#000'/><rect x='627' y='473' width='1' height='1' fill='#000'/><rect x='633' y='473' width='1' height='1' fill='#000'/><rect x='639' y='473' width='1' height='1' fill='#000'/><rect x='645' y='473' width='1' height='1' fill='#000'/><rect x='651' y='473' width='1' height='1' fill='#000'/><rect x='657' y='473' width='1' height='1' fill='#000'/><rect x='663' y='473' width='1' height='1' fill='#000'/><rect x='669' y='473' width='1' height='1' fill='#000'/><rect x='675' y='473' width='1' height='1' fill='#000'/><rect x='681' y='473' width='1' height='1' fill='#000'/><rect x='687' y='473' width='1' height='1' fill='#000'/><rect x='693' y='473' width='1' height='1' fill='#000'/><rect x='699' y='473' width='1' height='1' fill='#000'/><rect x='705' y='473' width='1' height='1' fill='#000'/><rect x='711' y='473' width='1' height='1' fill='#000'/><rect x='717' y='473' width='1' height='1' fill='#000'/><rect x='723' y='473' width='1' height='1' fill='#000'/><rect x='729' y='473' width='1' height='1' fill='#000'/><rect x='735' y='473' width='1' height='1' fill='#000'/><rect x='741' y='473' width='1' height='1' fill='#000'/><rect x='747' y='473' width='1' height='1' fill='#000'/><rect x='753' y='473' width='1' height='1' fill='#000'/><rect x='759' y='473' width='1' height='1' fill='#000'/><rect x='765' y='473' width='1' height='1' fill='#000'/><rect x='771' y='473' width='1' height='1' fill='#000'/><rect x='777' y='473' width='1' height='1' fill='#000'/><rect x='783' y='473' width='1' height='1' fill='#000'/><rect x='789' y='473' width='1' height='1' fill='#000'/><rect x='795' y='473' width='1' height='1' fill='#000'/><rect x='801' y='473' width='1' height='1' fill='#000'/><rect x='807' y='473' width='1' height='1' fill='#000'/><rect x='813' y='473' width='1' height='1' fill='#000'/><rect x='819' y='473' width='1' height='1' fill='#000'/><rect x='825' y='473' width='1' height='1' fill='#000'/><rect x='831' y='473' width='1' height='1' fill='#000'/><rect x='837' y='473' width='1' height='1' fill='#000'/><rect x='843' y='473' width='1' height='1' fill='#000'/><rect x='849' y='473' width='1' height='1' fill='#000'/><rect x='855' y='473' width='1' height='1' fill='#000'/><rect x='128' y='273' width='1' height='1' fill='#000'/><rect x='128' y='279' width='1' height='1' fill='#000'/><rect x='128' y='285' width='1' height='1' fill='#000'/><rect x='128' y='291' width='1' height='1' fill='#000'/><rect x='128' y='297' width='1' height='1' fill='#000'/><rect x='128' y='303' width='1' height='1' fill='#000'/><rect x='128' y='309' width='1' height='1' fill='#000'/><rect x='128' y='315' width='1' height='1' fill='#000'/><rect x='128' y='321' width='1' height='1' fill='#000'/><rect x='128' y='327' width='1' height='1' fill='#000'/><rect x='128' y='333' width='1' height='1' fill='#000'/><rect x='128' y='339' width='1' height='1' fill='#000'/><rect x='128' y='345' width='1' height='1' fill='#000'/><rect x='128' y='351' width='1' height='1' fill='#000'/><rect x='128' y='357' width='1' height='1' fill='#000'/><rect x='128' y='363' width='1' height='1' fill='#000'/><rect x='128' y='369' width='1' height='1' fill='#000'/><rect x='128' y='375' width='1' height='1' fill='#000'/><rect x='128' y='381' width='1' height='1' fill='#000'/><rect x='128' y='387' width='1' height='1' fill='#000'/><rect x='128' y='393' width='1' height='1' fill='#000'/><rect x='128' y='399' width='1' height='1' fill='#000'/><rect x='128' y='405' width='1' height='1' fill='#000'/><rect x='128' y='411' width='1' height='1' fill='#000'/><rect x='128' y='417' width='1' height='1' fill='#000'/><rect x='128' y='423' width='1' height='1' fill='#000'/><rect x='128' y='429' width='1' height='1' fill='#000'/><rect x='128' y='435' width='1' height='1' fill='#000'/><rect x='128' y='441' width='1' height='1' fill='#000'/><rect x='128' y='447' width='1' height='1' fill='#000'/><rect x='128' y='453' width='1' height='1' fill='#000'/><rect x='128' y='459' width='1' height='1' fill='#000'/><rect x='128' y='465' width='1' height='1' fill='#000'/><rect x='128' y='471' width='1' height='1' fill='#000'/><rect x='128' y='477' width='1' height='1' fill='#000'/><rect x='128' y='483' width='1' height='1' fill='#000'/><rect x='128' y='489' width='1' height='1' fill='#000'/><rect x='128' y='495' width='1' height='1' fill='#000'/><rect x='128' y='501' width='1' height='1' fill='#000'/><rect x='128' y='507' width='1' height='1' fill='#000'/><rect x='128' y='513' width='1' height='1' fill='#000'/><rect x='164' y='273' width='1' height='1' fill='#000'/><rect x='164' y='279' width='1' height='1' fill='#000'/><rect x='164' y='285' width='1' height='1' fill='#000'/><rect x='164' y='291' width='1' height='1' fill='#000'/><rect x='164' y='297' width='1' height='1' fill='#000'/><rect x='164' y='303' width='1' height='1' fill='#000'/><rect x='164' y='309' width='1' height='1' fill='#000'/><rect x='164' y='315' width='1' height='1' fill='#000'/><rect x='164' y='321' width='1' height='1' fill='#000'/><rect x='164' y='327' width='1' height='1' fill='#000'/><rect x='164' y='333' width='1' height='1' fill='#000'/><rect x='164' y='339' width='1' height='1' fill='#000'/><rect x='164' y='345' width='1' height='1' fill='#000'/><rect x='164' y='351' width='1' height='1' fill='#000'/><rect x='164' y='357' width='1' height='1' fill='#000'/><rect x='164' y='363' width='1' height='1' fill='#000'/><rect x='164' y='369' width='1' height='1' fill='#000'/><rect x='164' y='375' width='1' height='1' fill='#000'/><rect x='164' y='381' width='1' height='1' fill='#000'/><rect x='164' y='387' width='1' height='1' fill='#000'/><rect x='164' y='393' width='1' height='1' fill='#000'/><rect x='164' y='399' width='1' height='1' fill='#000'/><rect x='164' y='405' width='1' height='1' fill='#000'/><rect x='164' y='411' width='1' height='1' fill='#000'/><rect x='164' y='417' width='1' height='1' fill='#000'/><rect x='164' y='423' width='1' height='1' fill='#000'/><rect x='164' y='429' width='1' height='1' fill='#000'/><rect x='164' y='435' width='1' height='1' fill='#000'/><rect x='164' y='441' width='1' height='1' fill='#000'/><rect x='164' y='447' width='1' height='1' fill='#000'/><rect x='164' y='453' width='1' height='1' fill='#000'/><rect x='164' y='459' width='1' height='1' fill='#000'/><rect x='164' y='465' width='1' height='1' fill='#000'/><rect x='164' y='471' width='1' height='1' fill='#000'/><rect x='164' y='477' width='1' height='1' fill='#000'/><rect x='164' y='483' width='1' height='1' fill='#000'/><rect x='164' y='489' width='1' height='1' fill='#000'/><rect x='164' y='495' width='1' height='1' fill='#000'/><rect x='164' y='501' width='1' height='1' fill='#000'/><rect x='164' y='507' width='1' height='1' fill='#000'/><rect x='164' y='513' width='1' height='1' fill='#000'/><rect x='199' y='273' width='1' height='1' fill='#000'/><rect x='199' y='279' width='1' height='1' fill='#000'/><rect x='199' y='285' width='1' height='1' fill='#000'/><rect x='199' y='291' width='1' height='1' fill='#000'/><rect x='199' y='297' width='1' height='1' fill='#000'/><rect x='199' y='303' width='1' height='1' fill='#000'/><rect x='199' y='309' width='1' height='1' fill='#000'/><rect x='199' y='315' width='1' height='1' fill='#000'/><rect x='199' y='321' width='1' height='1' fill='#000'/><rect x='199' y='327' width='1' height='1' fill='#000'/><rect x='199' y='333' width='1' height='1' fill='#000'/><rect x='199' y='339' width='1' height='1' fill='#000'/><rect x='199' y='345' width='1' height='1' fill='#000'/><rect x='199' y='351' width='1' height='1' fill='#000'/><rect x='199' y='357' width='1' height='1' fill='#000'/><rect x='199' y='363' width='1' height='1' fill='#000'/><rect x='199' y='369' width='1' height='1' fill='#000'/><rect x='199' y='375' width='1' height='1' fill='#000'/><rect x='199' y='381' width='1' height='1' fill='#000'/><rect x='199' y='387' width='1' height='1' fill='#000'/><rect x='199' y='393' width='1' height='1' fill='#000'/><rect x='199' y='399' width='1' height='1' fill='#000'/><rect x='199' y='405' width='1' height='1' fill='#000'/><rect x='199' y='411' width='1' height='1' fill='#000'/><rect x='199' y='417' width='1' height='1' fill='#000'/><rect x='199' y='423' width='1' height='1' fill='#000'/><rect x='199' y='429' width='1' height='1' fill='#000'/><rect x='199' y='435' width='1' height='1' fill='#000'/><rect x='199' y='441' width='1' height='1' fill='#000'/><rect x='199' y='447' width='1' height='1' fill='#000'/><rect x='199' y='453' width='1' height='1' fill='#000'/><rect x='199' y='459' width='1' height='1' fill='#000'/><rect x='199' y='465' width='1' height='1' fill='#000'/><rect x='199' y='471' width='1' height='1' fill='#000'/><rect x='199' y='477' width='1' height='1' fill='#000'/><rect x='199' y='483' width='1' height='1' fill='#000'/><rect x='199' y='489' width='1' height='1' fill='#000'/><rect x='199' y='495' width='1' height='1' fill='#000'/><rect x='199' y='501' width='1' height='1' fill='#000'/><rect x='199' y='507' width='1' height='1' fill='#000'/><rect x='199' y='513' width='1' height='1' fill='#000'/><rect x='235' y='273' width='1' height='1' fill='#000'/><rect x='235' y='279' width='1' height='1' fill='#000'/><rect x='235' y='285' width='1' height='1' fill='#000'/><rect x='235' y='291' width='1' height='1' fill='#000'/><rect x='235' y='297' width='1' height='1' fill='#000'/><rect x='235' y='303' width='1' height='1' fill='#000'/><rect x='235' y='309' width='1' height='1' fill='#000'/><rect x='235' y='315' width='1' height='1' fill='#000'/><rect x='235' y='321' width='1' height='1' fill='#000'/><rect x='235' y='327' width='1' height='1' fill='#000'/><rect x='235' y='333' width='1' height='1' fill='#000'/><rect x='235' y='339' width='1' height='1' fill='#000'/><rect x='235' y='345' width='1' height='1' fill='#000'/><rect x='235' y='351' width='1' height='1' fill='#000'/><rect x='235' y='357' width='1' height='1' fill='#000'/><rect x='235' y='363' width='1' height='1' fill='#000'/><rect x='235' y='369' width='1' height='1' fill='#000'/><rect x='235' y='375' width='1' height='1' fill='#000'/><rect x='235' y='381' width='1' height='1' fill='#000'/><rect x='235' y='387' width='1' height='1' fill='#000'/><rect x='235' y='393' width='1' height='1' fill='#000'/><rect x='235' y='399' width='1' height='1' fill='#000'/><rect x='235' y='405' width='1' height='1' fill='#000'/><rect x='235' y='411' width='1' height='1' fill='#000'/><rect x='235' y='417' width='1' height='1' fill='#000'/><rect x='235' y='423' width='1' height='1' fill='#000'/><rect x='235' y='429' width='1' height='1' fill='#000'/><rect x='235' y='435' width='1' height='1' fill='#000'/><rect x='235' y='441' width='1' height='1' fill='#000'/><rect x='235' y='447' width='1' height='1' fill='#000'/><rect x='235' y='453' width='1' height='1' fill='#000'/><rect x='235' y='459' width='1' height='1' fill='#000'/><rect x='235' y='465' width='1' height='1' fill='#000'/><rect x='235' y='471' width='1' height='1' fill='#000'/><rect x='235' y='477' width='1' height='1' fill='#000'/><rect x='235' y='483' width='1' height='1' fill='#000'/><rect x='235' y='489' width='1' height='1' fill='#000'/><rect x='235' y='495' width='1' height='1' fill='#000'/><rect x='235' y='501' width='1' height='1' fill='#000'/><rect x='235' y='507' width='1' height='1' fill='#000'/><rect x='235' y='513' width='1' height='1' fill='#000'/><rect x='270' y='273' width='1' height='1' fill='#000'/><rect x='270' y='279' width='1' height='1' fill='#000'/><rect x='270' y='285' width='1' height='1' fill='#000'/><rect x='270' y='291' width='1' height='1' fill='#000'/><rect x='270' y='297' width='1' height='1' fill='#000'/><rect x='270' y='303' width='1' height='1' fill='#000'/><rect x='270' y='309' width='1' height='1' fill='#000'/><rect x='270' y='315' width='1' height='1' fill='#000'/><rect x='270' y='321' width='1' height='1' fill='#000'/><rect x='270' y='327' width='1' height='1' fill='#000'/><rect x='270' y='333' width='1' height='1' fill='#000'/><rect x='270' y='339' width='1' height='1' fill='#000'/><rect x='270' y='345' width='1' height='1' fill='#000'/><rect x='270' y='351' width='1' height='1' fill='#000'/><rect x='270' y='357' width='1' height='1' fill='#000'/><rect x='270' y='363' width='1' height='1' fill='#000'/><rect x='270' y='369' width='1' height='1' fill='#000'/><rect x='270' y='375' width='1' height='1' fill='#000'/><rect x='270' y='381' width='1' height='1' fill='#000'/><rect x='270' y='387' width='1' height='1' fill='#000'/><rect x='270' y='393' width='1' height='1' fill='#000'/><rect x='270' y='399' width='1' height='1' fill='#000'/><rect x='270' y='405' width='1' height='1' fill='#000'/><rect x='270' y='411' width='1' height='1' fill='#000'/><rect x='270' y='417' width='1' height='1' fill='#000'/><rect x='270' y='423' width='1' height='1' fill='#000'/><rect x='270' y='429' width='1' height='1' fill='#000'/><rect x='270' y='435' width='1' height='1' fill='#000'/><rect x='270' y='441' width='1' height='1' fill='#000'/><rect x='270' y='447' width='1' height='1' fill='#000'/><rect x='270' y='453' width='1' height='1' fill='#000'/><rect x='270' y='459' width='1' height='1' fill='#000'/><rect x='270' y='465' width='1' height='1' fill='#000'/><rect x='270' y='471' width='1' height='1' fill='#000'/><rect x='270' y='477' width='1' height='1' fill='#000'/><rect x='270' y='483' width='1' height='1' fill='#000'/><rect x='270' y='489' width='1' height='1' fill='#000'/><rect x='270' y='495' width='1' height='1' fill='#000'/><rect x='270' y='501' width='1' height='1' fill='#000'/><rect x='270' y='507' width='1' height='1' fill='#000'/><rect x='270' y='513' width='1' height='1' fill='#000'/><rect x='306' y='273' width='1' height='1' fill='#000'/><rect x='306' y='279' width='1' height='1' fill='#000'/><rect x='306' y='285' width='1' height='1' fill='#000'/><rect x='306' y='291' width='1' height='1' fill='#000'/><rect x='306' y='297' width='1' height='1' fill='#000'/><rect x='306' y='303' width='1' height='1' fill='#000'/><rect x='306' y='309' width='1' height='1' fill='#000'/><rect x='306' y='315' width='1' height='1' fill='#000'/><rect x='306' y='321' width='1' height='1' fill='#000'/><rect x='306' y='327' width='1' height='1' fill='#000'/><rect x='306' y='333' width='1' height='1' fill='#000'/><rect x='306' y='339' width='1' height='1' fill='#000'/><rect x='306' y='345' width='1' height='1' fill='#000'/><rect x='306' y='351' width='1' height='1' fill='#000'/><rect x='306' y='357' width='1' height='1' fill='#000'/><rect x='306' y='363' width='1' height='1' fill='#000'/><rect x='306' y='369' width='1' height='1' fill='#000'/><rect x='306' y='375' width='1' height='1' fill='#000'/><rect x='306' y='381' width='1' height='1' fill='#000'/><rect x='306' y='387' width='1' height='1' fill='#000'/><rect x='306' y='393' width='1' height='1' fill='#000'/><rect x='306' y='399' width='1' height='1' fill='#000'/><rect x='306' y='405' width='1' height='1' fill='#000'/><rect x='306' y='411' width='1' height='1' fill='#000'/><rect x='306' y='417' width='1' height='1' fill='#000'/><rect x='306' y='423' width='1' height='1' fill='#000'/><rect x='306' y='429' width='1' height='1' fill='#000'/><rect x='306' y='435' width='1' height='1' fill='#000'/><rect x='306' y='441' width='1' height='1' fill='#000'/><rect x='306' y='447' width='1' height='1' fill='#000'/><rect x='306' y='453' width='1' height='1' fill='#000'/><rect x='306' y='459' width='1' height='1' fill='#000'/><rect x='306' y='465' width='1' height='1' fill='#000'/><rect x='306' y='471' width='1' height='1' fill='#000'/><rect x='306' y='477' width='1' height='1' fill='#000'/><rect x='306' y='483' width='1' height='1' fill='#000'/><rect x='306' y='489' width='1' height='1' fill='#000'/><rect x='306' y='495' width='1' height='1' fill='#000'/><rect x='306' y='501' width='1' height='1' fill='#000'/><rect x='306' y='507' width='1' height='1' fill='#000'/><rect x='306' y='513' width='1' height='1' fill='#000'/><rect x='341' y='273' width='1' height='1' fill='#000'/><rect x='341' y='279' width='1' height='1' fill='#000'/><rect x='341' y='285' width='1' height='1' fill='#000'/><rect x='341' y='291' width='1' height='1' fill='#000'/><rect x='341' y='297' width='1' height='1' fill='#000'/><rect x='341' y='303' width='1' height='1' fill='#000'/><rect x='341' y='309' width='1' height='1' fill='#000'/><rect x='341' y='315' width='1' height='1' fill='#000'/><rect x='341' y='321' width='1' height='1' fill='#000'/><rect x='341' y='327' width='1' height='1' fill='#000'/><rect x='341' y='333' width='1' height='1' fill='#000'/><rect x='341' y='339' width='1' height='1' fill='#000'/><rect x='341' y='345' width='1' height='1' fill='#000'/><rect x='341' y='351' width='1' height='1' fill='#000'/><rect x='341' y='357' width='1' height='1' fill='#000'/><rect x='341' y='363' width='1' height='1' fill='#000'/><rect x='341' y='369' width='1' height='1' fill='#000'/><rect x='341' y='375' width='1' height='1' fill='#000'/><rect x='341' y='381' width='1' height='1' fill='#000'/><rect x='341' y='387' width='1' height='1' fill='#000'/><rect x='341' y='393' width='1' height='1' fill='#000'/><rect x='341' y='399' width='1' height='1' fill='#000'/><rect x='341' y='405' width='1' height='1' fill='#000'/><rect x='341' y='411' width='1' height='1' fill='#000'/><rect x='341' y='417' width='1' height='1' fill='#000'/><rect x='341' y='423' width='1' height='1' fill='#000'/><rect x='341' y='429' width='1' height='1' fill='#000'/><rect x='341' y='435' width='1' height='1' fill='#000'/><rect x='341' y='441' width='1' height='1' fill='#000'/><rect x='341' y='447' width='1' height='1' fill='#000'/><rect x='341' y='453' width='1' height='1' fill='#000'/><rect x='341' y='459' width='1' height='1' fill='#000'/><rect x='341' y='465' width='1' height='1' fill='#000'/><rect x='341' y='471' width='1' height='1' fill='#000'/><rect x='341' y='477' width='1' height='1' fill='#000'/><rect x='341' y='483' width='1' height='1' fill='#000'/><rect x='341' y='489' width='1' height='1' fill='#000'/><rect x='341' y='495' width='1' height='1' fill='#000'/><rect x='341' y='501' width='1' height='1' fill='#000'/><rect x='341' y='507' width='1' height='1' fill='#000'/><rect x='341' y='513' width='1' height='1' fill='#000'/><rect x='377' y='273' width='1' height='1' fill='#000'/><rect x='377' y='279' width='1' height='1' fill='#000'/><rect x='377' y='285' width='1' height='1' fill='#000'/><rect x='377' y='291' width='1' height='1' fill='#000'/><rect x='377' y='297' width='1' height='1' fill='#000'/><rect x='377' y='303' width='1' height='1' fill='#000'/><rect x='377' y='309' width='1' height='1' fill='#000'/><rect x='377' y='315' width='1' height='1' fill='#000'/><rect x='377' y='321' width='1' height='1' fill='#000'/><rect x='377' y='327' width='1' height='1' fill='#000'/><rect x='377' y='333' width='1' height='1' fill='#000'/><rect x='377' y='339' width='1' height='1' fill='#000'/><rect x='377' y='345' width='1' height='1' fill='#000'/><rect x='377' y='351' width='1' height='1' fill='#000'/><rect x='377' y='357' width='1' height='1' fill='#000'/><rect x='377' y='363' width='1' height='1' fill='#000'/><rect x='377' y='369' width='1' height='1' fill='#000'/><rect x='377' y='375' width='1' height='1' fill='#000'/><rect x='377' y='381' width='1' height='1' fill='#000'/><rect x='377' y='387' width='1' height='1' fill='#000'/><rect x='377' y='393' width='1' height='1' fill='#000'/><rect x='377' y='399' width='1' height='1' fill='#000'/><rect x='377' y='405' width='1' height='1' fill='#000'/><rect x='377' y='411' width='1' height='1' fill='#000'/><rect x='377' y='417' width='1' height='1' fill='#000'/><rect x='377' y='423' width='1' height='1' fill='#000'/><rect x='377' y='429' width='1' height='1' fill='#000'/><rect x='377' y='435' width='1' height='1' fill='#000'/><rect x='377' y='441' width='1' height='1' fill='#000'/><rect x='377' y='447' width='1' height='1' fill='#000'/><rect x='377' y='453' width='1' height='1' fill='#000'/><rect x='377' y='459' width='1' height='1' fill='#000'/><rect x='377' y='465' width='1' height='1' fill='#000'/><rect x='377' y='471' width='1' height='1' fill='#000'/><rect x='377' y='477' width='1' height='1' fill='#000'/><rect x='377' y='483' width='1' height='1' fill='#000'/><rect x='377' y='489' width='1' height='1' fill='#000'/><rect x='377' y='495' width='1' height='1' fill='#000'/><rect x='377' y='501' width='1' height='1' fill='#000'/><rect x='377' y='507' width='1' height='1' fill='#000'/><rect x='377' y='513' width='1' height='1' fill='#000'/><rect x='412' y='273' width='1' height='1' fill='#000'/><rect x='412' y='279' width='1' height='1' fill='#000'/><rect x='412' y='285' width='1' height='1' fill='#000'/><rect x='412' y='291' width='1' height='1' fill='#000'/><rect x='412' y='297' width='1' height='1' fill='#000'/><rect x='412' y='303' width='1' height='1' fill='#000'/><rect x='412' y='309' width='1' height='1' fill='#000'/><rect x='412' y='315' width='1' height='1' fill='#000'/><rect x='412' y='321' width='1' height='1' fill='#000'/><rect x='412' y='327' width='1' height='1' fill='#000'/><rect x='412' y='333' width='1' height='1' fill='#000'/><rect x='412' y='339' width='1' height='1' fill='#000'/><rect x='412' y='345' width='1' height='1' fill='#000'/><rect x='412' y='351' width='1' height='1' fill='#000'/><rect x='412' y='357' width='1' height='1' fill='#000'/><rect x='412' y='363' width='1' height='1' fill='#000'/><rect x='412' y='369' width='1' height='1' fill='#000'/><rect x='412' y='375' width='1' height='1' fill='#000'/><rect x='412' y='381' width='1' height='1' fill='#000'/><rect x='412' y='387' width='1' height='1' fill='#000'/><rect x='412' y='393' width='1' height='1' fill='#000'/><rect x='412' y='399' width='1' height='1' fill='#000'/><rect x='412' y='405' width='1' height='1' fill='#000'/><rect x='412' y='411' width='1' height='1' fill='#000'/><rect x='412' y='417' width='1' height='1' fill='#000'/><rect x='412' y='423' width='1' height='1' fill='#000'/><rect x='412' y='429' width='1' height='1' fill='#000'/><rect x='412' y='435' width='1' height='1' fill='#000'/><rect x='412' y='441' width='1' height='1' fill='#000'/><rect x='412' y='447' width='1' height='1' fill='#000'/><rect x='412' y='453' width='1' height='1' fill='#000'/><rect x='412' y='459' width='1' height='1' fill='#000'/><rect x='412' y='465' width='1' height='1' fill='#000'/><rect x='412' y='471' width='1' height='1' fill='#000'/><rect x='412' y='477' width='1' height='1' fill='#000'/><rect x='412' y='483' width='1' height='1' fill='#000'/><rect x='412' y='489' width='1' height='1' fill='#000'/><rect x='412' y='495' width='1' height='1' fill='#000'/><rect x='412' y='501' width='1' height='1' fill='#000'/><rect x='412' y='507' width='1' height='1' fill='#000'/><rect x='412' y='513' width='1' height='1' fill='#000'/><rect x='448' y='273' width='1' height='1' fill='#000'/><rect x='448' y='279' width='1' height='1' fill='#000'/><rect x='448' y='285' width='1' height='1' fill='#000'/><rect x='448' y='291' width='1' height='1' fill='#000'/><rect x='448' y='297' width='1' height='1' fill='#000'/><rect x='448' y='303' width='1' height='1' fill='#000'/><rect x='448' y='309' width='1' height='1' fill='#000'/><rect x='448' y='315' width='1' height='1' fill='#000'/><rect x='448' y='321' width='1' height='1' fill='#000'/><rect x='448' y='327' width='1' height='1' fill='#000'/><rect x='448' y='333' width='1' height='1' fill='#000'/><rect x='448' y='339' width='1' height='1' fill='#000'/><rect x='448' y='345' width='1' height='1' fill='#000'/><rect x='448' y='351' width='1' height='1' fill='#000'/><rect x='448' y='357' width='1' height='1' fill='#000'/><rect x='448' y='363' width='1' height='1' fill='#000'/><rect x='448' y='369' width='1' height='1' fill='#000'/><rect x='448' y='375' width='1' height='1' fill='#000'/><rect x='448' y='381' width='1' height='1' fill='#000'/><rect x='448' y='387' width='1' height='1' fill='#000'/><rect x='448' y='393' width='1' height='1' fill='#000'/><rect x='448' y='399' width='1' height='1' fill='#000'/><rect x='448' y='405' width='1' height='1' fill='#000'/><rect x='448' y='411' width='1' height='1' fill='#000'/><rect x='448' y='417' width='1' height='1' fill='#000'/><rect x='448' y='423' width='1' height='1' fill='#000'/><rect x='448' y='429' width='1' height='1' fill='#000'/><rect x='448' y='435' width='1' height='1' fill='#000'/><rect x='448' y='441' width='1' height='1' fill='#000'/><rect x='448' y='447' width='1' height='1' fill='#000'/><rect x='448' y='453' width='1' height='1' fill='#000'/><rect x='448' y='459' width='1' height='1' fill='#000'/><rect x='448' y='465' width='1' height='1' fill='#000'/><rect x='448' y='471' width='1' height='1' fill='#000'/><rect x='448' y='477' width='1' height='1' fill='#000'/><rect x='448' y='483' width='1' height='1' fill='#000'/><rect x='448' y='489' width='1' height='1' fill='#000'/><rect x='448' y='495' width='1' height='1' fill='#000'/><rect x='448' y='501' width='1' height='1' fill='#000'/><rect x='448' y='507' width='1' height='1' fill='#000'/><rect x='448' y='513' width='1' height='1' fill='#000'/><rect x='483' y='273' width='1' height='1' fill='#000'/><rect x='483' y='279' width='1' height='1' fill='#000'/><rect x='483' y='285' width='1' height='1' fill='#000'/><rect x='483' y='291' width='1' height='1' fill='#000'/><rect x='483' y='297' width='1' height='1' fill='#000'/><rect x='483' y='303' width='1' height='1' fill='#000'/><rect x='483' y='309' width='1' height='1' fill='#000'/><rect x='483' y='315' width='1' height='1' fill='#000'/><rect x='483' y='321' width='1' height='1' fill='#000'/><rect x='483' y='327' width='1' height='1' fill='#000'/><rect x='483' y='333' width='1' height='1' fill='#000'/><rect x='483' y='339' width='1' height='1' fill='#000'/><rect x='483' y='345' width='1' height='1' fill='#000'/><rect x='483' y='351' width='1' height='1' fill='#000'/><rect x='483' y='357' width='1' height='1' fill='#000'/><rect x='483' y='363' width='1' height='1' fill='#000'/><rect x='483' y='369' width='1' height='1' fill='#000'/><rect x='483' y='375' width='1' height='1' fill='#000'/><rect x='483' y='381' width='1' height='1' fill='#000'/><rect x='483' y='387' width='1' height='1' fill='#000'/><rect x='483' y='393' width='1' height='1' fill='#000'/><rect x='483' y='399' width='1' height='1' fill='#000'/><rect x='483' y='405' width='1' height='1' fill='#000'/><rect x='483' y='411' width='1' height='1' fill='#000'/><rect x='483' y='417' width='1' height='1' fill='#000'/><rect x='483' y='423' width='1' height='1' fill='#000'/><rect x='483' y='429' width='1' height='1' fill='#000'/><rect x='483' y='435' width='1' height='1' fill='#000'/><rect x='483' y='441' width='1' height='1' fill='#000'/><rect x='483' y='447' width='1' height='1' fill='#000'/><rect x='483' y='453' width='1' height='1' fill='#000'/><rect x='483' y='459' width='1' height='1' fill='#000'/><rect x='483' y='465' width='1' height='1' fill='#000'/><rect x='483' y='471' width='1' height='1' fill='#000'/><rect x='483' y='477' width='1' height='1' fill='#000'/><rect x='483' y='483' width='1' height='1' fill='#000'/><rect x='483' y='489' width='1' height='1' fill='#000'/><rect x='483' y='495' width='1' height='1' fill='#000'/><rect x='483' y='501' width='1' height='1' fill='#000'/><rect x='483' y='507' width='1' height='1' fill='#000'/><rect x='483' y='513' width='1' height='1' fill='#000'/><rect x='519' y='273' width='1' height='1' fill='#000'/><rect x='519' y='279' width='1' height='1' fill='#000'/><rect x='519' y='285' width='1' height='1' fill='#000'/><rect x='519' y='291' width='1' height='1' fill='#000'/><rect x='519' y='297' width='1' height='1' fill='#000'/><rect x='519' y='303' width='1' height='1' fill='#000'/><rect x='519' y='309' width='1' height='1' fill='#000'/><rect x='519' y='315' width='1' height='1' fill='#000'/><rect x='519' y='321' width='1' height='1' fill='#000'/><rect x='519' y='327' width='1' height='1' fill='#000'/><rect x='519' y='333' width='1' height='1' fill='#000'/><rect x='519' y='339' width='1' height='1' fill='#000'/><rect x='519' y='345' width='1' height='1' fill='#000'/><rect x='519' y='351' width='1' height='1' fill='#000'/><rect x='519' y='357' width='1' height='1' fill='#000'/><rect x='519' y='363' width='1' height='1' fill='#000'/><rect x='519' y='369' width='1' height='1' fill='#000'/><rect x='519' y='375' width='1' height='1' fill='#000'/><rect x='519' y='381' width='1' height='1' fill='#000'/><rect x='519' y='387' width='1' height='1' fill='#000'/><rect x='519' y='393' width='1' height='1' fill='#000'/><rect x='519' y='399' width='1' height='1' fill='#000'/><rect x='519' y='405' width='1' height='1' fill='#000'/><rect x='519' y='411' width='1' height='1' fill='#000'/><rect x='519' y='417' width='1' height='1' fill='#000'/><rect x='519' y='423' width='1' height='1' fill='#000'/><rect x='519' y='429' width='1' height='1' fill='#000'/><rect x='519' y='435' width='1' height='1' fill='#000'/><rect x='519' y='441' width='1' height='1' fill='#000'/><rect x='519' y='447' width='1' height='1' fill='#000'/><rect x='519' y='453' width='1' height='1' fill='#000'/><rect x='519' y='459' width='1' height='1' fill='#000'/><rect x='519' y='465' width='1' height='1' fill='#000'/><rect x='519' y='471' width='1' height='1' fill='#000'/><rect x='519' y='477' width='1' height='1' fill='#000'/><rect x='519' y='483' width='1' height='1' fill='#000'/><rect x='519' y='489' width='1' height='1' fill='#000'/><rect x='519' y='495' width='1' height='1' fill='#000'/><rect x='519' y='501' width='1' height='1' fill='#000'/><rect x='519' y='507' width='1' height='1' fill='#000'/><rect x='519' y='513' width='1' height='1' fill='#000'/><rect x='554' y='273' width='1' height='1' fill='#000'/><rect x='554' y='279' width='1' height='1' fill='#000'/><rect x='554' y='285' width='1' height='1' fill='#000'/><rect x='554' y='291' width='1' height='1' fill='#000'/><rect x='554' y='297' width='1' height='1' fill='#000'/><rect x='554' y='303' width='1' height='1' fill='#000'/><rect x='554' y='309' width='1' height='1' fill='#000'/><rect x='554' y='315' width='1' height='1' fill='#000'/><rect x='554' y='321' width='1' height='1' fill='#000'/><rect x='554' y='327' width='1' height='1' fill='#000'/><rect x='554' y='333' width='1' height='1' fill='#000'/><rect x='554' y='339' width='1' height='1' fill='#000'/><rect x='554' y='345' width='1' height='1' fill='#000'/><rect x='554' y='351' width='1' height='1' fill='#000'/><rect x='554' y='357' width='1' height='1' fill='#000'/><rect x='554' y='363' width='1' height='1' fill='#000'/><rect x='554' y='369' width='1' height='1' fill='#000'/><rect x='554' y='375' width='1' height='1' fill='#000'/><rect x='554' y='381' width='1' height='1' fill='#000'/><rect x='554' y='387' width='1' height='1' fill='#000'/><rect x='554' y='393' width='1' height='1' fill='#000'/><rect x='554' y='399' width='1' height='1' fill='#000'/><rect x='554' y='405' width='1' height='1' fill='#000'/><rect x='554' y='411' width='1' height='1' fill='#000'/><rect x='554' y='417' width='1' height='1' fill='#000'/><rect x='554' y='423' width='1' height='1' fill='#000'/><rect x='554' y='429' width='1' height='1' fill='#000'/><rect x='554' y='435' width='1' height='1' fill='#000'/><rect x='554' y='441' width='1' height='1' fill='#000'/><rect x='554' y='447' width='1' height='1' fill='#000'/><rect x='554' y='453' width='1' height='1' fill='#000'/><rect x='554' y='459' width='1' height='1' fill='#000'/><rect x='554' y='465' width='1' height='1' fill='#000'/><rect x='554' y='471' width='1' height='1' fill='#000'/><rect x='554' y='477' width='1' height='1' fill='#000'/><rect x='554' y='483' width='1' height='1' fill='#000'/><rect x='554' y='489' width='1' height='1' fill='#000'/><rect x='554' y='495' width='1' height='1' fill='#000'/><rect x='554' y='501' width='1' height='1' fill='#000'/><rect x='554' y='507' width='1' height='1' fill='#000'/><rect x='554' y='513' width='1' height='1' fill='#000'/><rect x='589' y='273' width='1' height='1' fill='#000'/><rect x='589' y='279' width='1' height='1' fill='#000'/><rect x='589' y='285' width='1' height='1' fill='#000'/><rect x='589' y='291' width='1' height='1' fill='#000'/><rect x='589' y='297' width='1' height='1' fill='#000'/><rect x='589' y='303' width='1' height='1' fill='#000'/><rect x='589' y='309' width='1' height='1' fill='#000'/><rect x='589' y='315' width='1' height='1' fill='#000'/><rect x='589' y='321' width='1' height='1' fill='#000'/><rect x='589' y='327' width='1' height='1' fill='#000'/><rect x='589' y='333' width='1' height='1' fill='#000'/><rect x='589' y='339' width='1' height='1' fill='#000'/><rect x='589' y='345' width='1' height='1' fill='#000'/><rect x='589' y='351' width='1' height='1' fill='#000'/><rect x='589' y='357' width='1' height='1' fill='#000'/><rect x='589' y='363' width='1' height='1' fill='#000'/><rect x='589' y='369' width='1' height='1' fill='#000'/><rect x='589' y='375' width='1' height='1' fill='#000'/><rect x='589' y='381' width='1' height='1' fill='#000'/><rect x='589' y='387' width='1' height='1' fill='#000'/><rect x='589' y='393' width='1' height='1' fill='#000'/><rect x='589' y='399' width='1' height='1' fill='#000'/><rect x='589' y='405' width='1' height='1' fill='#000'/><rect x='589' y='411' width='1' height='1' fill='#000'/><rect x='589' y='417' width='1' height='1' fill='#000'/><rect x='589' y='423' width='1' height='1' fill='#000'/><rect x='589' y='429' width='1' height='1' fill='#000'/><rect x='589' y='435' width='1' height='1' fill='#000'/><rect x='589' y='441' width='1' height='1' fill='#000'/><rect x='589' y='447' width='1' height='1' fill='#000'/><rect x='589' y='453' width='1' height='1' fill='#000'/><rect x='589' y='459' width='1' height='1' fill='#000'/><rect x='589' y='465' width='1' height='1' fill='#000'/><rect x='589' y='471' width='1' height='1' fill='#000'/><rect x='589' y='477' width='1' height='1' fill='#000'/><rect x='589' y='483' width='1' height='1' fill='#000'/><rect x='589' y='489' width='1' height='1' fill='#000'/><rect x='589' y='495' width='1' height='1' fill='#000'/><rect x='589' y='501' width='1' height='1' fill='#000'/><rect x='589' y='507' width='1' height='1' fill='#000'/><rect x='589' y='513' width='1' height='1' fill='#000'/><rect x='625' y='273' width='1' height='1' fill='#000'/><rect x='625' y='279' width='1' height='1' fill='#000'/><rect x='625' y='285' width='1' height='1' fill='#000'/><rect x='625' y='291' width='1' height='1' fill='#000'/><rect x='625' y='297' width='1' height='1' fill='#000'/><rect x='625' y='303' width='1' height='1' fill='#000'/><rect x='625' y='309' width='1' height='1' fill='#000'/><rect x='625' y='315' width='1' height='1' fill='#000'/><rect x='625' y='321' width='1' height='1' fill='#000'/><rect x='625' y='327' width='1' height='1' fill='#000'/><rect x='625' y='333' width='1' height='1' fill='#000'/><rect x='625' y='339' width='1' height='1' fill='#000'/><rect x='625' y='345' width='1' height='1' fill='#000'/><rect x='625' y='351' width='1' height='1' fill='#000'/><rect x='625' y='357' width='1' height='1' fill='#000'/><rect x='625' y='363' width='1' height='1' fill='#000'/><rect x='625' y='369' width='1' height='1' fill='#000'/><rect x='625' y='375' width='1' height='1' fill='#000'/><rect x='625' y='381' width='1' height='1' fill='#000'/><rect x='625' y='387' width='1' height='1' fill='#000'/><rect x='625' y='393' width='1' height='1' fill='#000'/><rect x='625' y='399' width='1' height='1' fill='#000'/><rect x='625' y='405' width='1' height='1' fill='#000'/><rect x='625' y='411' width='1' height='1' fill='#000'/><rect x='625' y='417' width='1' height='1' fill='#000'/><rect x='625' y='423' width='1' height='1' fill='#000'/><rect x='625' y='429' width='1' height='1' fill='#000'/><rect x='625' y='435' width='1' height='1' fill='#000'/><rect x='625' y='441' width='1' height='1' fill='#000'/><rect x='625' y='447' width='1' height='1' fill='#000'/><rect x='625' y='453' width='1' height='1' fill='#000'/><rect x='625' y='459' width='1' height='1' fill='#000'/><rect x='625' y='465' width='1' height='1' fill='#000'/><rect x='625' y='471' width='1' height='1' fill='#000'/><rect x='625' y='477' width='1' height='1' fill='#000'/><rect x='625' y='483' width='1' height='1' fill='#000'/><rect x='625' y='489' width='1' height='1' fill='#000'/><rect x='625' y='495' width='1' height='1' fill='#000'/><rect x='625' y='501' width='1' height='1' fill='#000'/><rect x='625' y='507' width='1' height='1' fill='#000'/><rect x='625' y='513' width='1' height='1' fill='#000'/><rect x='660' y='273' width='1' height='1' fill='#000'/><rect x='660' y='279' width='1' height='1' fill='#000'/><rect x='660' y='285' width='1' height='1' fill='#000'/><rect x='660' y='291' width='1' height='1' fill='#000'/><rect x='660' y='297' width='1' height='1' fill='#000'/><rect x='660' y='303' width='1' height='1' fill='#000'/><rect x='660' y='309' width='1' height='1' fill='#000'/><rect x='660' y='315' width='1' height='1' fill='#000'/><rect x='660' y='321' width='1' height='1' fill='#000'/><rect x='660' y='327' width='1' height='1' fill='#000'/><rect x='660' y='333' width='1' height='1' fill='#000'/><rect x='660' y='339' width='1' height='1' fill='#000'/><rect x='660' y='345' width='1' height='1' fill='#000'/><rect x='660' y='351' width='1' height='1' fill='#000'/><rect x='660' y='357' width='1' height='1' fill='#000'/><rect x='660' y='363' width='1' height='1' fill='#000'/><rect x='660' y='369' width='1' height='1' fill='#000'/><rect x='660' y='375' width='1' height='1' fill='#000'/><rect x='660' y='381' width='1' height='1' fill='#000'/><rect x='660' y='387' width='1' height='1' fill='#000'/><rect x='660' y='393' width='1' height='1' fill='#000'/><rect x='660' y='399' width='1' height='1' fill='#000'/><rect x='660' y='405' width='1' height='1' fill='#000'/><rect x='660' y='411' width='1' height='1' fill='#000'/><rect x='660' y='417' width='1' height='1' fill='#000'/><rect x='660' y='423' width='1' height='1' fill='#000'/><rect x='660' y='429' width='1' height='1' fill='#000'/><rect x='660' y='435' width='1' height='1' fill='#000'/><rect x='660' y='441' width='1' height='1' fill='#000'/><rect x='660' y='447' width='1' height='1' fill='#000'/><rect x='660' y='453' width='1' height='1' fill='#000'/><rect x='660' y='459' width='1' height='1' fill='#000'/><rect x='660' y='465' width='1' height='1' fill='#000'/><rect x='660' y='471' width='1' height='1' fill='#000'/><rect x='660' y='477' width='1' height='1' fill='#000'/><rect x='660' y='483' width='1' height='1' fill='#000'/><rect x='660' y='489' width='1' height='1' fill='#000'/><rect x='660' y='495' width='1' height='1' fill='#000'/><rect x='660' y='501' width='1' height='1' fill='#000'/><rect x='660' y='507' width='1' height='1' fill='#000'/><rect x='660' y='513' width='1' height='1' fill='#000'/><rect x='696' y='273' width='1' height='1' fill='#000'/><rect x='696' y='279' width='1' height='1' fill='#000'/><rect x='696' y='285' width='1' height='1' fill='#000'/><rect x='696' y='291' width='1' height='1' fill='#000'/><rect x='696' y='297' width='1' height='1' fill='#000'/><rect x='696' y='303' width='1' height='1' fill='#000'/><rect x='696' y='309' width='1' height='1' fill='#000'/><rect x='696' y='315' width='1' height='1' fill='#000'/><rect x='696' y='321' width='1' height='1' fill='#000'/><rect x='696' y='327' width='1' height='1' fill='#000'/><rect x='696' y='333' width='1' height='1' fill='#000'/><rect x='696' y='339' width='1' height='1' fill='#000'/><rect x='696' y='345' width='1' height='1' fill='#000'/><rect x='696' y='351' width='1' height='1' fill='#000'/><rect x='696' y='357' width='1' height='1' fill='#000'/><rect x='696' y='363' width='1' height='1' fill='#000'/><rect x='696' y='369' width='1' height='1' fill='#000'/><rect x='696' y='375' width='1' height='1' fill='#000'/><rect x='696' y='381' width='1' height='1' fill='#000'/><rect x='696' y='387' width='1' height='1' fill='#000'/><rect x='696' y='393' width='1' height='1' fill='#000'/><rect x='696' y='399' width='1' height='1' fill='#000'/><rect x='696' y='405' width='1' height='1' fill='#000'/><rect x='696' y='411' width='1' height='1' fill='#000'/><rect x='696' y='417' width='1' height='1' fill='#000'/><rect x='696' y='423' width='1' height='1' fill='#000'/><rect x='696' y='429' width='1' height='1' fill='#000'/><rect x='696' y='435' width='1' height='1' fill='#000'/><rect x='696' y='441' width='1' height='1' fill='#000'/><rect x='696' y='447' width='1' height='1' fill='#000'/><rect x='696' y='453' width='1' height='1' fill='#000'/><rect x='696' y='459' width='1' height='1' fill='#000'/><rect x='696' y='465' width='1' height='1' fill='#000'/><rect x='696' y='471' width='1' height='1' fill='#000'/><rect x='696' y='477' width='1' height='1' fill='#000'/><rect x='696' y='483' width='1' height='1' fill='#000'/><rect x='696' y='489' width='1' height='1' fill='#000'/><rect x='696' y='495' width='1' height='1' fill='#000'/><rect x='696' y='501' width='1' height='1' fill='#000'/><rect x='696' y='507' width='1' height='1' fill='#000'/><rect x='696' y='513' width='1' height='1' fill='#000'/><rect x='731' y='273' width='1' height='1' fill='#000'/><rect x='731' y='279' width='1' height='1' fill='#000'/><rect x='731' y='285' width='1' height='1' fill='#000'/><rect x='731' y='291' width='1' height='1' fill='#000'/><rect x='731' y='297' width='1' height='1' fill='#000'/><rect x='731' y='303' width='1' height='1' fill='#000'/><rect x='731' y='309' width='1' height='1' fill='#000'/><rect x='731' y='315' width='1' height='1' fill='#000'/><rect x='731' y='321' width='1' height='1' fill='#000'/><rect x='731' y='327' width='1' height='1' fill='#000'/><rect x='731' y='333' width='1' height='1' fill='#000'/><rect x='731' y='339' width='1' height='1' fill='#000'/><rect x='731' y='345' width='1' height='1' fill='#000'/><rect x='731' y='351' width='1' height='1' fill='#000'/><rect x='731' y='357' width='1' height='1' fill='#000'/><rect x='731' y='363' width='1' height='1' fill='#000'/><rect x='731' y='369' width='1' height='1' fill='#000'/><rect x='731' y='375' width='1' height='1' fill='#000'/><rect x='731' y='381' width='1' height='1' fill='#000'/><rect x='731' y='387' width='1' height='1' fill='#000'/><rect x='731' y='393' width='1' height='1' fill='#000'/><rect x='731' y='399' width='1' height='1' fill='#000'/><rect x='731' y='405' width='1' height='1' fill='#000'/><rect x='731' y='411' width='1' height='1' fill='#000'/><rect x='731' y='417' width='1' height='1' fill='#000'/><rect x='731' y='423' width='1' height='1' fill='#000'/><rect x='731' y='429' width='1' height='1' fill='#000'/><rect x='731' y='435' width='1' height='1' fill='#000'/><rect x='731' y='441' width='1' height='1' fill='#000'/><rect x='731' y='447' width='1' height='1' fill='#000'/><rect x='731' y='453' width='1' height='1' fill='#000'/><rect x='731' y='459' width='1' height='1' fill='#000'/><rect x='731' y='465' width='1' height='1' fill='#000'/><rect x='731' y='471' width='1' height='1' fill='#000'/><rect x='731' y='477' width='1' height='1' fill='#000'/><rect x='731' y='483' width='1' height='1' fill='#000'/><rect x='731' y='489' width='1' height='1' fill='#000'/><rect x='731' y='495' width='1' height='1' fill='#000'/><rect x='731' y='501' width='1' height='1' fill='#000'/><rect x='731' y='507' width='1' height='1' fill='#000'/><rect x='731' y='513' width='1' height='1' fill='#000'/><rect x='767' y='273' width='1' height='1' fill='#000'/><rect x='767' y='279' width='1' height='1' fill='#000'/><rect x='767' y='285' width='1' height='1' fill='#000'/><rect x='767' y='291' width='1' height='1' fill='#000'/><rect x='767' y='297' width='1' height='1' fill='#000'/><rect x='767' y='303' width='1' height='1' fill='#000'/><rect x='767' y='309' width='1' height='1' fill='#000'/><rect x='767' y='315' width='1' height='1' fill='#000'/><rect x='767' y='321' width='1' height='1' fill='#000'/><rect x='767' y='327' width='1' height='1' fill='#000'/><rect x='767' y='333' width='1' height='1' fill='#000'/><rect x='767' y='339' width='1' height='1' fill='#000'/><rect x='767' y='345' width='1' height='1' fill='#000'/><rect x='767' y='351' width='1' height='1' fill='#000'/><rect x='767' y='357' width='1' height='1' fill='#000'/><rect x='767' y='363' width='1' height='1' fill='#000'/><rect x='767' y='369' width='1' height='1' fill='#000'/><rect x='767' y='375' width='1' height='1' fill='#000'/><rect x='767' y='381' width='1' height='1' fill='#000'/><rect x='767' y='387' width='1' height='1' fill='#000'/><rect x='767' y='393' width='1' height='1' fill='#000'/><rect x='767' y='399' width='1' height='1' fill='#000'/><rect x='767' y='405' width='1' height='1' fill='#000'/><rect x='767' y='411' width='1' height='1' fill='#000'/><rect x='767' y='417' width='1' height='1' fill='#000'/><rect x='767' y='423' width='1' height='1' fill='#000'/><rect x='767' y='429' width='1' height='1' fill='#000'/><rect x='767' y='435' width='1' height='1' fill='#000'/><rect x='767' y='441' width='1' height='1' fill='#000'/><rect x='767' y='447' width='1' height='1' fill='#000'/><rect x='767' y='453' width='1' height='1' fill='#000'/><rect x='767' y='459' width='1' height='1' fill='#000'/><rect x='767' y='465' width='1' height='1' fill='#000'/><rect x='767' y='471' width='1' height='1' fill='#000'/><rect x='767' y='477' width='1' height='1' fill='#000'/><rect x='767' y='483' width='1' height='1' fill='#000'/><rect x='767' y='489' width='1' height='1' fill='#000'/><rect x='767' y='495' width='1' height='1' fill='#000'/><rect x='767' y='501' width='1' height='1' fill='#000'/><rect x='767' y='507' width='1' height='1' fill='#000'/><rect x='767' y='513' width='1' height='1' fill='#000'/><rect x='802' y='273' width='1' height='1' fill='#000'/><rect x='802' y='279' width='1' height='1' fill='#000'/><rect x='802' y='285' width='1' height='1' fill='#000'/><rect x='802' y='291' width='1' height='1' fill='#000'/><rect x='802' y='297' width='1' height='1' fill='#000'/><rect x='802' y='303' width='1' height='1' fill='#000'/><rect x='802' y='309' width='1' height='1' fill='#000'/><rect x='802' y='315' width='1' height='1' fill='#000'/><rect x='802' y='321' width='1' height='1' fill='#000'/><rect x='802' y='327' width='1' height='1' fill='#000'/><rect x='802' y='333' width='1' height='1' fill='#000'/><rect x='802' y='339' width='1' height='1' fill='#000'/><rect x='802' y='345' width='1' height='1' fill='#000'/><rect x='802' y='351' width='1' height='1' fill='#000'/><rect x='802' y='357' width='1' height='1' fill='#000'/><rect x='802' y='363' width='1' height='1' fill='#000'/><rect x='802' y='369' width='1' height='1' fill='#000'/><rect x='802' y='375' width='1' height='1' fill='#000'/><rect x='802' y='381' width='1' height='1' fill='#000'/><rect x='802' y='387' width='1' height='1' fill='#000'/><rect x='802' y='393' width='1' height='1' fill='#000'/><rect x='802' y='399' width='1' height='1' fill='#000'/><rect x='802' y='405' width='1' height='1' fill='#000'/><rect x='802' y='411' width='1' height='1' fill='#000'/><rect x='802' y='417' width='1' height='1' fill='#000'/><rect x='802' y='423' width='1' height='1' fill='#000'/><rect x='802' y='429' width='1' height='1' fill='#000'/><rect x='802' y='435' width='1' height='1' fill='#000'/><rect x='802' y='441' width='1' height='1' fill='#000'/><rect x='802' y='447' width='1' height='1' fill='#000'/><rect x='802' y='453' width='1' height='1' fill='#000'/><rect x='802' y='459' width='1' height='1' fill='#000'/><rect x='802' y='465' width='1' height='1' fill='#000'/><rect x='802' y='471' width='1' height='1' fill='#000'/><rect x='802' y='477' width='1' height='1' fill='#000'/><rect x='802' y='483' width='1' height='1' fill='#000'/><rect x='802' y='489' width='1' height='1' fill='#000'/><rect x='802' y='495' width='1' height='1' fill='#000'/><rect x='802' y='501' width='1' height='1' fill='#000'/><rect x='802' y='507' width='1' height='1' fill='#000'/><rect x='802' y='513' width='1' height='1' fill='#000'/><rect x='838' y='273' width='1' height='1' fill='#000'/><rect x='838' y='279' width='1' height='1' fill='#000'/><rect x='838' y='285' width='1' height='1' fill='#000'/><rect x='838' y='291' width='1' height='1' fill='#000'/><rect x='838' y='297' width='1' height='1' fill='#000'/><rect x='838' y='303' width='1' height='1' fill='#000'/><rect x='838' y='309' width='1' height='1' fill='#000'/><rect x='838' y='315' width='1' height='1' fill='#000'/><rect x='838' y='321' width='1' height='1' fill='#000'/><rect x='838' y='327' width='1' height='1' fill='#000'/><rect x='838' y='333' width='1' height='1' fill='#000'/><rect x='838' y='339' width='1' height='1' fill='#000'/><rect x='838' y='345' width='1' height='1' fill='#000'/><rect x='838' y='351' width='1' height='1' fill='#000'/><rect x='838' y='357' width='1' height='1' fill='#000'/><rect x='838' y='363' width='1' height='1' fill='#000'/><rect x='838' y='369' width='1' height='1' fill='#000'/><rect x='838' y='375' width='1' height='1' fill='#000'/><rect x='838' y='381' width='1' height='1' fill='#000'/><rect x='838' y='387' width='1' height='1' fill='#000'/><rect x='838' y='393' width='1' height='1' fill='#000'/><rect x='838' y='399' width='1' height='1' fill='#000'/><rect x='838' y='405' width='1' height='1' fill='#000'/><rect x='838' y='411' width='1' height='1' fill='#000'/><rect x='838' y='417' width='1' height='1' fill='#000'/><rect x='838' y='423' width='1' height='1' fill='#000'/><rect x='838' y='429' width='1' height='1' fill='#000'/><rect x='838' y='435' width='1' height='1' fill='#000'/><rect x='838' y='441' width='1' height='1' fill='#000'/><rect x='838' y='447' width='1' height='1' fill='#000'/><rect x='838' y='453' width='1' height='1' fill='#000'/><rect x='838' y='459' width='1' height='1' fill='#000'/><rect x='838' y='465' width='1' height='1' fill='#000'/><rect x='838' y='471' width='1' height='1' fill='#000'/><rect x='838' y='477' width='1' height='1' fill='#000'/><rect x='838' y='483' width='1' height='1' fill='#000'/><rect x='838' y='489' width='1' height='1' fill='#000'/><rect x='838' y='495' width='1' height='1' fill='#000'/><rect x='838' y='501' width='1' height='1' fill='#000'/><rect x='838' y='507' width='1' height='1' fill='#000'/><rect x='838' y='513' width='1' height='1' fill='#000'/><rect x='89' y='268' width='771' height='1' fill='#000'/><rect x='89' y='514' width='771' height='1' fill='#000'/><rect x='93' y='268' width='1' height='251' fill='#000'/><rect x='859' y='268' width='1' height='247' fill='#000'/><rect x='100' y='512' width='1' height='5' fill='#000'/><rect x='100' y='268' width='1' height='3' fill='#000'/><rect x='107' y='512' width='1' height='5' fill='#000'/><rect x='107' y='268' width='1' height='3' fill='#000'/><rect x='114' y='512' width='1' height='5' fill='#000'/><rect x='114' y='268' width='1' height='3' fill='#000'/><rect x='121' y='512' width='1' height='5' fill='#000'/><rect x='121' y='268' width='1' height='3' fill='#000'/><rect x='128' y='510' width='1' height='9' fill='#000'/><rect x='128' y='268' width='1' height='5' fill='#000'/><rect x='136' y='512' width='1' height='5' fill='#000'/><rect x='136' y='268' width='1' height='3' fill='#000'/><rect x='143' y='512' width='1' height='5' fill='#000'/><rect x='143' y='268' width='1' height='3' fill='#000'/><rect x='150' y='512' width='1' height='5' fill='#000'/><rect x='150' y='268' width='1' height='3' fill='#000'/><rect x='157' y='512' width='1' height='5' fill='#000'/><rect x='157' y='268' width='1' height='3' fill='#000'/><rect x='164' y='510' width='1' height='9' fill='#000'/><rect x='164' y='268' width='1' height='5' fill='#000'/><rect x='171' y='512' width='1' height='5' fill='#000'/><rect x='171' y='268' width='1' height='3' fill='#000'/><rect x='178' y='512' width='1' height='5' fill='#000'/><rect x='178' y='268' width='1' height='3' fill='#000'/><rect x='185' y='512' width='1' height='5' fill='#000'/><rect x='185' y='268' width='1' height='3' fill='#000'/><rect x='192' y='512' width='1' height='5' fill='#000'/><rect x='192' y='268' width='1' height='3' fill='#000'/><rect x='199' y='510' width='1' height='9' fill='#000'/><rect x='199' y='268' width='1' height='5' fill='#000'/><rect x='206' y='512' width='1' height='5' fill='#000'/><rect x='206' y='268' width='1' height='3' fill='#000'/><rect x='214' y='512' width='1' height='5' fill='#000'/><rect x='214' y='268' width='1' height='3' fill='#000'/><rect x='221' y='512' width='1' height='5' fill='#000'/><rect x='221' y='268' width='1' height='3' fill='#000'/><rect x='228' y='512' width='1' height='5' fill='#000'/><rect x='228' y='268' width='1' height='3' fill='#000'/><rect x='235' y='510' width='1' height='9' fill='#000'/><rect x='235' y='268' width='1' height='5' fill='#000'/><rect x='242' y='512' width='1' height='5' fill='#000'/><rect x='242' y='268' width='1' height='3' fill='#000'/><rect x='249' y='512' width='1' height='5' fill='#000'/><rect x='249' y='268' width='1' height='3' fill='#000'/><rect x='256' y='512' width='1' height='5' fill='#000'/><rect x='256' y='268' width='1' height='3' fill='#000'/><rect x='263' y='512' width='1' height='5' fill='#000'/><rect x='263' y='268' width='1' height='3' fill='#000'/><rect x='270' y='510' width='1' height='9' fill='#000'/><rect x='270' y='268' width='1' height='5' fill='#000'/><rect x='277' y='512' width='1' height='5' fill='#000'/><rect x='277' y='268' width='1' height='3' fill='#000'/><rect x='284' y='512' width='1' height='5' fill='#000'/><rect x='284' y='268' width='1' height='3' fill='#000'/><rect x='292' y='512' width='1' height='5' fill='#000'/><rect x='292' y='268' width='1' height='3' fill='#000'/><rect x='299' y='512' width='1' height='5' fill='#000'/><rect x='299' y='268' width='1' height='3' fill='#000'/><rect x='306' y='510' width='1' height='9' fill='#000'/><rect x='306' y='268' width='1' height='5' fill='#000'/><rect x='313' y='512' width='1' height='5' fill='#000'/><rect x='313' y='268' width='1' height='3' fill='#000'/><rect x='320' y='512' width='1' height='5' fill='#000'/><rect x='320' y='268' width='1' height='3' fill='#000'/><rect x='327' y='512' width='1' height='5' fill='#000'/><rect x='327' y='268' width='1' height='3' fill='#000'/><rect x='334' y='512' width='1' height='5' fill='#000'/><rect x='334' y='268' width='1' height='3' fill='#000'/><rect x='341' y='510' width='1' height='9' fill='#000'/><rect x='341' y='268' width='1' height='5' fill='#000'/><rect x='348' y='512' width='1' height='5' fill='#000'/><rect x='348' y='268' width='1' height='3' fill='#000'/><rect x='355' y='512' width='1' height='5' fill='#000'/><rect x='355' y='268' width='1' height='3' fill='#000'/><rect x='362' y='512' width='1' height='5' fill='#000'/><rect x='362' y='268' width='1' height='3' fill='#000'/><rect x='370' y='512' width='1' height='5' fill='#000'/><rect x='370' y='268' width='1' height='3' fill='#000'/><rect x='377' y='510' width='1' height='9' fill='#000'/><rect x='377' y='268' width='1' height='5' fill='#000'/><rect x='384' y='512' width='1' height='5' fill='#000'/><rect x='384' y='268' width='1' height='3' fill='#000'/><rect x='391' y='512' width='1' height='5' fill='#000'/><rect x='391' y='268' width='1' height='3' fill='#000'/><rect x='398' y='512' width='1' height='5' fill='#000'/><rect x='398' y='268' width='1' height='3' fill='#000'/><rect x='405' y='512' width='1' height='5' fill='#000'/><rect x='405' y='268' width='1' height='3' fill='#000'/><rect x='412' y='510' width='1' height='9' fill='#000'/><rect x='412' y='268' width='1' height='5' fill='#000'/><rect x='419' y='512' width='1' height='5' fill='#000'/><rect x='419' y='268' width='1' height='3' fill='#000'/><rect x='426' y='512' width='1' height='5' fill='#000'/><rect x='426' y='268' width='1' height='3' fill='#000'/><rect x='433' y='512' width='1' height='5' fill='#000'/><rect x='433' y='268' width='1' height='3' fill='#000'/><rect x='441' y='512' width='1' height='5' fill='#000'/><rect x='441' y='268' width='1' height='3' fill='#000'/><rect x='448' y='510' width='1' height='9' fill='#000'/><rect x='448' y='268' width='1' height='5' fill='#000'/><rect x='455' y='512' width='1' height='5' fill='#000'/><rect x='455' y='268' width='1' height='3' fill='#000'/><rect x='462' y='512' width='1' height='5' fill='#000'/><rect x='462' y='268' width='1' height='3' fill='#000'/><rect x='469' y='512' width='1' height='5' fill='#000'/><rect x='469' y='268' width='1' height='3' fill='#000'/><rect x='476' y='512' width='1' height='5' fill='#000'/><rect x='476' y='268' width='1' height='3' fill='#000'/><rect x='483' y='510' width='1' height='9' fill='#000'/><rect x='483' y='268' width='1' height='5' fill='#000'/><rect x='490' y='512' width='1' height='5' fill='#000'/><rect x='490' y='268' width='1' height='3' fill='#000'/><rect x='497' y='512' width='1' height='5' fill='#000'/><rect x='497' y='268' width='1' height='3' fill='#000'/><rect x='504' y='512' width='1' height='5' fill='#000'/><rect x='504' y='268' width='1' height='3' fill='#000'/><rect x='511' y='512' width='1' height='5' fill='#000'/><rect x='511' y='268' width='1' height='3' fill='#000'/><rect x='519' y='510' width='1' height='9' fill='#000'/><rect x='519' y='268' width='1' height='5' fill='#000'/><rect x='526' y='512' width='1' height='5' fill='#000'/><rect x='526' y='268' width='1' height='3' fill='#000'/><rect x='533' y='512' width='1' height='5' fill='#000'/><rect x='533' y='268' width='1' height='3' fill='#000'/><rect x='540' y='512' width='1' height='5' fill='#000'/><rect x='540' y='268' width='1' height='3' fill='#000'/><rect x='547' y='512' width='1' height='5' fill='#000'/><rect x='547' y='268' width='1' height='3' fill='#000'/><rect x='554' y='510' width='1' height='9' fill='#000'/><rect x='554' y='268' width='1' height='5' fill='#000'/><rect x='561' y='512' width='1' height='5' fill='#000'/><rect x='561' y='268' width='1' height='3' fill='#000'/><rect x='568' y='512' width='1' height='5' fill='#000'/><rect x='568' y='268' width='1' height='3' fill='#000'/><rect x='575' y='512' width='1' height='5' fill='#000'/><rect x='575' y='268' width='1' height='3' fill='#000'/><rect x='582' y='512' width='1' height='5' fill='#000'/><rect x='582' y='268' width='1' height='3' fill='#000'/><rect x='589' y='510' width='1' height='9' fill='#000'/><rect x='589' y='268' width='1' height='5' fill='#000'/><rect x='597' y='512' width='1' height='5' fill='#000'/><rect x='597' y='268' width='1' height='3' fill='#000'/><rect x='604' y='512' width='1' height='5' fill='#000'/><rect x='604' y='268' width='1' height='3' fill='#000'/><rect x='611' y='512' width='1' height='5' fill='#000'/><rect x='611' y='268' width='1' height='3' fill='#000'/><rect x='618' y='512' width='1' height='5' fill='#000'/><rect x='618' y='268' width='1' height='3' fill='#000'/><rect x='625' y='510' width='1' height='9' fill='#000'/><rect x='625' y='268' width='1' height='5' fill='#000'/><rect x='632' y='512' width='1' height='5' fill='#000'/><rect x='632' y='268' width='1' height='3' fill='#000'/><rect x='639' y='512' width='1' height='5' fill='#000'/><rect x='639' y='268' width='1' height='3' fill='#000'/><rect x='646' y='512' width='1' height='5' fill='#000'/><rect x='646' y='268' width='1' height='3' fill='#000'/><rect x='653' y='512' width='1' height='5' fill='#000'/><rect x='653' y='268' width='1' height='3' fill='#000'/><rect x='660' y='510' width='1' height='9' fill='#000'/><rect x='660' y='268' width='1' height='5' fill='#000'/><rect x='667' y='512' width='1' height='5' fill='#000'/><rect x='667' y='268' width='1' height='3' fill='#000'/><rect x='675' y='512' width='1' height='5' fill='#000'/><rect x='675' y='268' width='1' height='3' fill='#000'/><rect x='682' y='512' width='1' height='5' fill='#000'/><rect x='682' y='268' width='1' height='3' fill='#000'/><rect x='689' y='512' width='1' height='5' fill='#000'/><rect x='689' y='268' width='1' height='3' fill='#000'/><rect x='696' y='510' width='1' height='9' fill='#000'/><rect x='696' y='268' width='1' height='5' fill='#000'/><rect x='703' y='512' width='1' height='5' fill='#000'/><rect x='703' y='268' width='1' height='3' fill='#000'/><rect x='710' y='512' width='1' height='5' fill='#000'/><rect x='710' y='268' width='1' height='3' fill='#000'/><rect x='717' y='512' width='1' height='5' fill='#000'/><rect x='717' y='268' width='1' height='3' fill='#000'/><rect x='724' y='512' width='1' height='5' fill='#000'/><rect x='724' y='268' width='1' height='3' fill='#000'/><rect x='731' y='510' width='1' height='9' fill='#000'/><rect x='731' y='268' width='1' height='5' fill='#000'/><rect x='738' y='512' width='1' height='5' fill='#000'/><rect x='738' y='268' width='1' height='3' fill='#000'/><rect x='745' y='512' width='1' height='5' fill='#000'/><rect x='745' y='268' width='1' height='3' fill='#000'/><rect x='753' y='512' width='1' height='5' fill='#000'/><rect x='753' y='268' width='1' height='3' fill='#000'/><rect x='760' y='512' width='1' height='5' fill='#000'/><rect x='760' y='268' width='1' height='3' fill='#000'/><rect x='767' y='510' width='1' height='9' fill='#000'/><rect x='767' y='268' width='1' height='5' fill='#000'/><rect x='774' y='512' width='1' height='5' fill='#000'/><rect x='774' y='268' width='1' height='3' fill='#000'/><rect x='781' y='512' width='1' height='5' fill='#000'/><rect x='781' y='268' width='1' height='3' fill='#000'/><rect x='788' y='512' width='1' height='5' fill='#000'/><rect x='788' y='268' width='1' height='3' fill='#000'/><rect x='795' y='512' width='1' height='5' fill='#000'/><rect x='795' y='268' width='1' height='3' fill='#000'/><rect x='802' y='510' width='1' height='9' fill='#000'/><rect x='802' y='268' width='1' height='5' fill='#000'/><rect x='809' y='512' width='1' height='5' fill='#000'/><rect x='809' y='268' width='1' height='3' fill='#000'/><rect x='816' y='512' width='1' height='5' fill='#000'/><rect x='816' y='268' width='1' height='3' fill='#000'/><rect x='823' y='512' width='1' height='5' fill='#000'/><rect x='823' y='268' width='1' height='3' fill='#000'/><rect x='831' y='512' width='1' height='5' fill='#000'/><rect x='831' y='268' width='1' height='3' fill='#000'/><rect x='838' y='510' width='1' height='9' fill='#000'/><rect x='838' y='268' width='1' height='5' fill='#000'/><rect x='845' y='512' width='1' height='5' fill='#000'/><rect x='845' y='268' width='1' height='3' fill='#000'/><rect x='852' y='512' width='1' height='5' fill='#000'/><rect x='852' y='268' width='1' height='3' fill='#000'/><rect x='89' y='309' width='9' height='1' fill='#000'/><rect x='89' y='350' width='9' height='1' fill='#000'/><rect x='89' y='391' width='9' height='1' fill='#000'/><rect x='89' y='432' width='9' height='1' fill='#000'/><rect x='89' y='473' width='9' height='1' fill='#000'/><rect x='91' y='297' width='5' height='1' fill='#000'/><rect x='91' y='289' width='5' height='1' fill='#000'/><rect x='91' y='284' width='5' height='1' fill='#000'/><rect x='91' y='280' width='5' height='1' fill='#000'/><rect x='91' y='277' width='5' height='1' fill='#000'/><rect x='91' y='274' width='5' height='1' fill='#000'/><rect x='91' y='272' width='5' height='1' fill='#000'/><rect x='91' y='270' width='5' height='1' fill='#000'/><rect x='91' y='338' width='5' height='1' fill='#000'/><rect x='91' y='330' width='5' height='1' fill='#000'/><rect x='91' y='325' width='5' height='1' fill='#000'/><rect x='91' y='321' width='5' height='1' fill='#000'/><rect x='91' y='318' width='5' height='1' fill='#000'/><rect x='91' y='315' width='5' height='1' fill='#000'/><rect x='91' y='313' width='5' height='1' fill='#000'/><rect x='91' y='311' width='5' height='1' fill='#000'/><rect x='91' y='379' width='5' height='1' fill='#000'/><rect x='91' y='371' width='5' height='1' fill='#000'/><rect x='91' y='366' width='5' height='1' fill='#000'/><rect x='91' y='362' width='5' height='1' fill='#000'/><rect x='91' y='359' width='5' height='1' fill='#000'/><rect x='91' y='356' width='5' height='1' fill='#000'/><rect x='91' y='354' width='5' height='1' fill='#000'/><rect x='91' y='352' width='5' height='1' fill='#000'/><rect x='91' y='420' width='5' height='1' fill='#000'/><rect x='91' y='412' width='5' height='1' fill='#000'/><rect x='91' y='407' width='5' height='1' fill='#000'/><rect x='91' y='403' width='5' height='1' fill='#000'/><rect x='91' y='400' width='5' height='1' fill='#000'/><rect x='91' y='397' width='5' height='1' fill='#000'/><rect x='91' y='395' width='5' height='1' fill='#000'/><rect x='91' y='393' width='5' height='1' fill='#000'/><rect x='91' y='461' width='5' height='1' fill='#000'/><rect x='91' y='453' width='5' height='1' fill='#000'/><rect x='91' y='448' width='5' height='1' fill='#000'/><rect x='91' y='444' width='5' height='1' fill='#000'/><rect x='91' y='441' width='5' height='1' fill='#000'/><rect x='91' y='438' width='5' height='1' fill='#000'/><rect x='91' y='436' width='5' height='1' fill='#000'/><rect x='91' y='434' width='5' height='1' fill='#000'/><rect x='91' y='502' width='5' height='1' fill='#000'/><rect x='91' y='494' width='5' height='1' fill='#000'/><rect x='91' y='489' width='5' height='1' fill='#000'/><rect x='91' y='485' width='5' height='1' fill='#000'/><rect x='91' y='482' width='5' height='1' fill='#000'/><rect x='91' y='479' width='5' height='1' fill='#000'/><rect x='91' y='477' width='5' height='1' fill='#000'/><rect x='91' y='475' width='5' height='1' fill='#000'/><path d='M94.5,307.5 L94.5,314.5 L95.5,316.5 L99.5,320.5 L100.5,322.5 L102.5,323.5 L104.5,328.5 L106.5,332.5 L108.5,337.5 L110.5,341.5 L120.5,341.5 L120.5,342.5 L125.5,342.5 L125.5,343.5 L130.5,343.5 L130.5,344.5 L135.5,344.5 L135.5,345.5 L140.5,345.5 L140.5,346.5 L145.5,346.5 L145.5,347.5 L168.5,347.5 L168.5,348.5 L195.5,348.5 L195.5,349.5 L223.5,349.5 L223.5,350.5 L255.5,350.5 L255.5,351.5 L313.5,351.5 L313.5,352.5 L457.5,352.5 L457.5,353.5 L527.5,353.5 L527.5,354.5 L574.5,354.5 L574.5,355.5 L610.5,355.5 L610.5,356.5 L642.5,356.5 L642.5,357.5 L692.5,357.5 L692.5,358.5 L777.5,358.5 L777.5,359.5 L848.5,359.5 L848.5,360.5 L859.5,360.5' fill='none' stroke='#f00' stroke-width='1.1'/><path d='M94.5,392.5 L94.5,412.5 L96.5,419.5 L98.5,428.5 L101.5,432.5 L103.5,441.5 L107.5,448.5 L111.5,454.5 L118.5,459.5 L128.5,464.5 L140.5,467.5 L155.5,469.5 L160.5,470.5 L167.5,470.5 L167.5,471.5 L172.5,471.5 L172.5,472.5 L180.5,472.5 L180.5,473.5 L191.5,473.5 L191.5,474.5 L202.5,474.5 L202.5,475.5 L215.5,475.5 L215.5,476.5 L229.5,476.5 L229.5,477.5 L245.5,477.5 L245.5,478.5 L263.5,478.5 L263.5,479.5 L284.5,479.5 L284.5,480.5 L309.5,480.5 L309.5,481.5 L338.5,481.5 L338.5,482.5 L371.5,482.5 L371.5,483.5 L406.5,483.5 L406.5,484.5 L443.5,484.5 L443.5,485.5 L479.5,485.5 L479.5,486.5 L513.5,486.5 L513.5,487.5 L545.5,487.5 L545.5,488.5 L575.5,488.5 L575.5,489.5 L602.5,489.5 L602.5,490.5 L627.5,490.5 L627.5,491.5 L651.5,491.5 L651.5,492.5 L674.5,492.5 L674.5,493.5 L696.5,493.5 L696.5,494.5 L717.5,494.5 L717.5,495.5 L738.5,495.5 L738.5,496.5 L759.5,496.5 L759.5,497.5 L780.5,497.5 L780.5,498.5 L802.5,498.5 L802.5,499.5 L824.5,499.5 L824.5,500.5 L847.5,500.5 L847.5,501.5 L859.5,501.5' fill='none' stroke='#008000' stroke-width='1.1'/><rect x='751.5' y='268.5' width='107' height='26' fill='#fff' stroke='#000' stroke-width='1'/><rect x='754' y='274' width='27' height='1' fill='#f00'/><rect x='754' y='287' width='27' height='1' fill='#008000'/></svg>
<div class='t' style='left:34.05px;top:20px;font:bold 14px/14px Liberation Sans;color:#fff;transform:scaleX(0.9467);transform-origin:0 0;text-shadow:1px 1px 0 #0a1a7a;'>Red Neuronal Artificial v.0.0.1 - Alejandro Rodríguez Villalobos</div>
<div class='t' style='left:22.30px;top:50px;font:12px/12px Liberation Sans;color:#000;transform:scaleX(0.9048);transform-origin:0 0;'>Red</div>
<div class='t' style='left:64.54px;top:50px;font:12px/12px Liberation Sans;color:#000;transform:scaleX(0.8569);transform-origin:0 0;'>Experimentos</div>
<div class='t' style='left:139.84px;top:48px;font:12px/12px Liberation Sans;color:#000;transform:scaleX(0.8597);transform-origin:0 0;'>Entrenamiento</div>
<div class='t' style='left:219.40px;top:50px;font:12px/12px Liberation Sans;color:#000;transform:scaleX(0.8609);transform-origin:0 0;'>Cálculos</div>
<div class='t' style='left:33.34px;top:81px;font:12px/12px Liberation Sans;color:#0046d5;transform:scaleX(0.8557);transform-origin:0 0;'>Parámetros</div>
<div class='t' style='left:245.50px;top:81px;font:12px/12px Liberation Sans;color:#0046d5;transform:scaleX(0.8524);transform-origin:0 0;'>Aprendizaje</div>
<div class='t' style='left:44.70px;top:103px;font:bold 12px/12px Liberation Sans;color:#000;'>Num. Iteraciones =</div>
<div class='t' style='left:51.00px;top:129px;font:bold 12px/12px Liberation Sans;color:#000;'>Ciclos/iteración =</div>
<div class='t' style='left:36.00px;top:155px;font:bold 12px/12px Liberation Sans;color:#000;'>Factor aprendizaje =</div>
<div class='t' style='left:63.80px;top:203px;font:bold 12px/12px Liberation Sans;color:#008000;transform:scaleX(0.9589);transform-origin:0 0;'>Error2 prom. &lt;=</div>
<div class='t' style='left:54.12px;top:180px;font:12px/12px Liberation Sans;color:#000;transform:scaleX(0.8750);transform-origin:0 0;'>Entrenar hasta que:</div>
<div class='t' style='left:158.00px;top:103px;font:12px/12px Liberation Sans;color:#000;transform:scaleX(0.8667);transform-origin:0 0;'>2000</div>
<div class='t' style='left:158.00px;top:129px;font:12px/12px Liberation Sans;color:#000;transform:scaleX(0.8286);transform-origin:0 0;'>3</div>
<div class='t' style='left:158.00px;top:155px;font:12px/12px Liberation Sans;color:#000;transform:scaleX(0.9087);transform-origin:0 0;'>0.42</div>
<div class='t' style='left:158.00px;top:203px;font:12px/12px Liberation Sans;color:#008000;transform:scaleX(0.8920);transform-origin:0 0;'>0.000002</div>
<div class='t' style='left:264.80px;top:104px;font:bold 12px/12px Liberation Sans;color:#333344;transform:scaleX(1.0117);transform-origin:0 0;'>Iteración =</div>
<div class='t' style='left:337.90px;top:104px;font:12px/12px Liberation Sans;color:#444;transform:scaleX(0.8900);transform-origin:0 0;'>215983</div>
<div class='t' style='left:257.60px;top:126px;font:bold 12px/12px Liberation Sans;color:#c00018;transform:scaleX(0.9700);transform-origin:0 0;'>Error máx. =</div>
<div class='t' style='left:337.90px;top:126px;font:12px/12px Liberation Sans;color:#c8102e;transform:scaleX(0.8959);transform-origin:0 0;'>0,00571484627566621</div>
<div class='t' style='left:250.22px;top:149px;font:bold 12px/12px Liberation Sans;color:#c00018;transform:scaleX(0.9776);transform-origin:0 0;'>|Error máx.| =</div>
<div class='t' style='left:337.90px;top:149px;font:12px/12px Liberation Sans;color:#c8102e;transform:scaleX(0.8959);transform-origin:0 0;'>0,00571484627566621</div>
<div class='t' style='left:245.50px;top:173px;font:bold 12px/12px Liberation Sans;color:#008000;transform:scaleX(0.9639);transform-origin:0 0;'>Error2 prom. =</div>
<div class='t' style='left:337.00px;top:173px;font:12px/12px Liberation Sans;color:#008000;transform:scaleX(0.9024);transform-origin:0 0;'>1,99999882909425E-06</div>
<div class='t' style='left:264.80px;top:200px;font:bold 12px/12px Liberation Sans;color:#333344;transform:scaleX(0.9635);transform-origin:0 0;'>Progreso =</div>
<div class='t' style='left:337.02px;top:200px;font:12px/12px Liberation Sans;color:#444;transform:scaleX(0.8758);transform-origin:0 0;'>100 %</div>
<div class='t' style='left:511.83px;top:99px;font:12px/12px Liberation Sans;color:#000;transform:scaleX(0.8689);transform-origin:0 0;'>Entrenar</div>
<div class='t' style='left:515.52px;top:135px;font:12px/12px Liberation Sans;color:#000;transform:scaleX(0.8811);transform-origin:0 0;'>Pausar</div>
<div class='t' style='left:512.41px;top:167px;font:12px/12px Liberation Sans;color:#000;transform:scaleX(0.8881);transform-origin:0 0;'>Detener</div>
<div class='t' style='left:493.60px;top:193px;font:12px/12px Liberation Sans;color:#000;transform:scaleX(0.8487);transform-origin:0 0;'>Gráfica</div>
<div class='t' style='left:560.30px;top:193px;font:12px/12px Liberation Sans;color:#000;transform:scaleX(0.8927);transform-origin:0 0;'>Y = Log</div>
<div class='t' style='left:493.60px;top:213px;font:12px/12px Liberation Sans;color:#000;transform:scaleX(0.8698);transform-origin:0 0;'>Guardar log</div>
<div class='t' style='left:339.17px;top:244px;font:bold 14px/14px Liberation Sans;color:#000;transform:scaleX(1.0253);transform-origin:0 0;'>Entrenamiento de la red neuronal</div>
<div class='t' style='left:417.60px;top:544px;font:bold 12px/12px Liberation Sans;color:#000;'>Experimentos (10^3)</div>
<div class='t' style='left:788.50px;top:271px;font:9px/9px Liberation Sans;color:#000;transform:scaleX(1.1261);transform-origin:0 0;'>|Error máx.|</div>
<div class='t' style='left:788.50px;top:284px;font:9px/9px Liberation Sans;color:#000;transform:scaleX(1.1222);transform-origin:0 0;'>Error^2 prom.</div>
<div class='t' style='left:90.17px;top:525px;font:12px/12px Liberation Sans;color:#000;transform:scaleX(0.9500);transform-origin:0 0;'>0</div>
<div class='t' style='left:121.85px;top:525px;font:12px/12px Liberation Sans;color:#000;transform:scaleX(0.9500);transform-origin:0 0;'>10</div>
<div class='t' style='left:158.32px;top:525px;font:12px/12px Liberation Sans;color:#000;transform:scaleX(0.9500);transform-origin:0 0;'>20</div>
<div class='t' style='left:193.32px;top:525px;font:12px/12px Liberation Sans;color:#000;transform:scaleX(0.9500);transform-origin:0 0;'>30</div>
<div class='t' style='left:229.32px;top:525px;font:12px/12px Liberation Sans;color:#000;transform:scaleX(0.9500);transform-origin:0 0;'>40</div>
<div class='t' style='left:264.32px;top:525px;font:12px/12px Liberation Sans;color:#000;transform:scaleX(0.9500);transform-origin:0 0;'>50</div>
<div class='t' style='left:300.32px;top:525px;font:12px/12px Liberation Sans;color:#000;transform:scaleX(0.9500);transform-origin:0 0;'>60</div>
<div class='t' style='left:335.32px;top:525px;font:12px/12px Liberation Sans;color:#000;transform:scaleX(0.9500);transform-origin:0 0;'>70</div>
<div class='t' style='left:371.32px;top:525px;font:12px/12px Liberation Sans;color:#000;transform:scaleX(0.9500);transform-origin:0 0;'>80</div>
<div class='t' style='left:406.32px;top:525px;font:12px/12px Liberation Sans;color:#000;transform:scaleX(0.9500);transform-origin:0 0;'>90</div>
<div class='t' style='left:438.52px;top:525px;font:12px/12px Liberation Sans;color:#000;transform:scaleX(0.9500);transform-origin:0 0;'>100</div>
<div class='t' style='left:474.00px;top:525px;font:12px/12px Liberation Sans;color:#000;transform:scaleX(0.9500);transform-origin:0 0;'>110</div>
<div class='t' style='left:509.52px;top:525px;font:12px/12px Liberation Sans;color:#000;transform:scaleX(0.9500);transform-origin:0 0;'>120</div>
<div class='t' style='left:544.52px;top:525px;font:12px/12px Liberation Sans;color:#000;transform:scaleX(0.9500);transform-origin:0 0;'>130</div>
<div class='t' style='left:579.52px;top:525px;font:12px/12px Liberation Sans;color:#000;transform:scaleX(0.9500);transform-origin:0 0;'>140</div>
<div class='t' style='left:615.52px;top:525px;font:12px/12px Liberation Sans;color:#000;transform:scaleX(0.9500);transform-origin:0 0;'>150</div>
<div class='t' style='left:650.52px;top:525px;font:12px/12px Liberation Sans;color:#000;transform:scaleX(0.9500);transform-origin:0 0;'>160</div>
<div class='t' style='left:686.52px;top:525px;font:12px/12px Liberation Sans;color:#000;transform:scaleX(0.9500);transform-origin:0 0;'>170</div>
<div class='t' style='left:721.52px;top:525px;font:12px/12px Liberation Sans;color:#000;transform:scaleX(0.9500);transform-origin:0 0;'>180</div>
<div class='t' style='left:757.52px;top:525px;font:12px/12px Liberation Sans;color:#000;transform:scaleX(0.9500);transform-origin:0 0;'>190</div>
<div class='t' style='left:793.00px;top:525px;font:12px/12px Liberation Sans;color:#000;transform:scaleX(0.9500);transform-origin:0 0;'>200</div>
<div class='t' style='left:829.00px;top:525px;font:12px/12px Liberation Sans;color:#000;transform:scaleX(0.9500);transform-origin:0 0;'>210</div>
<div class='t' style='left:59.15px;top:265px;font:12px/12px Liberation Sans;color:#000;transform:scaleX(1.0500);transform-origin:0 0;'>10</div>
<div class='t' style='left:72.20px;top:261px;font:10px/10px Liberation Sans;color:#000;'>0</div>
<div class='t' style='left:55.23px;top:306px;font:12px/12px Liberation Sans;color:#000;transform:scaleX(0.9667);transform-origin:0 0;'>10</div>
<div class='t' style='left:68.00px;top:302px;font:10px/10px Liberation Sans;color:#000;'>-1</div>
<div class='t' style='left:55.23px;top:347px;font:12px/12px Liberation Sans;color:#000;transform:scaleX(0.9667);transform-origin:0 0;'>10</div>
<div class='t' style='left:68.00px;top:343px;font:10px/10px Liberation Sans;color:#000;'>-2</div>
<div class='t' style='left:55.23px;top:388px;font:12px/12px Liberation Sans;color:#000;transform:scaleX(0.9667);transform-origin:0 0;'>10</div>
<div class='t' style='left:68.00px;top:384px;font:10px/10px Liberation Sans;color:#000;'>-3</div>
<div class='t' style='left:55.23px;top:429px;font:12px/12px Liberation Sans;color:#000;transform:scaleX(0.9667);transform-origin:0 0;'>10</div>
<div class='t' style='left:68.00px;top:425px;font:10px/10px Liberation Sans;color:#000;'>-4</div>
<div class='t' style='left:55.23px;top:470px;font:12px/12px Liberation Sans;color:#000;transform:scaleX(0.9667);transform-origin:0 0;'>10</div>
<div class='t' style='left:68.00px;top:466px;font:10px/10px Liberation Sans;color:#000;'>-5</div>
<div class='t' style='left:55.23px;top:511px;font:12px/12px Liberation Sans;color:#000;transform:scaleX(0.9667);transform-origin:0 0;'>10</div>
<div class='t' style='left:68.00px;top:507px;font:10px/10px Liberation Sans;color:#000;'>-6</div>
<div class='t' style='left:34px;top:406.94px;font:bold 13px/13px Liberation Sans;color:#000;transform:rotate(-90deg) scaleX(0.9387);transform-origin:0 0;'>Error</div>
</body></html>
